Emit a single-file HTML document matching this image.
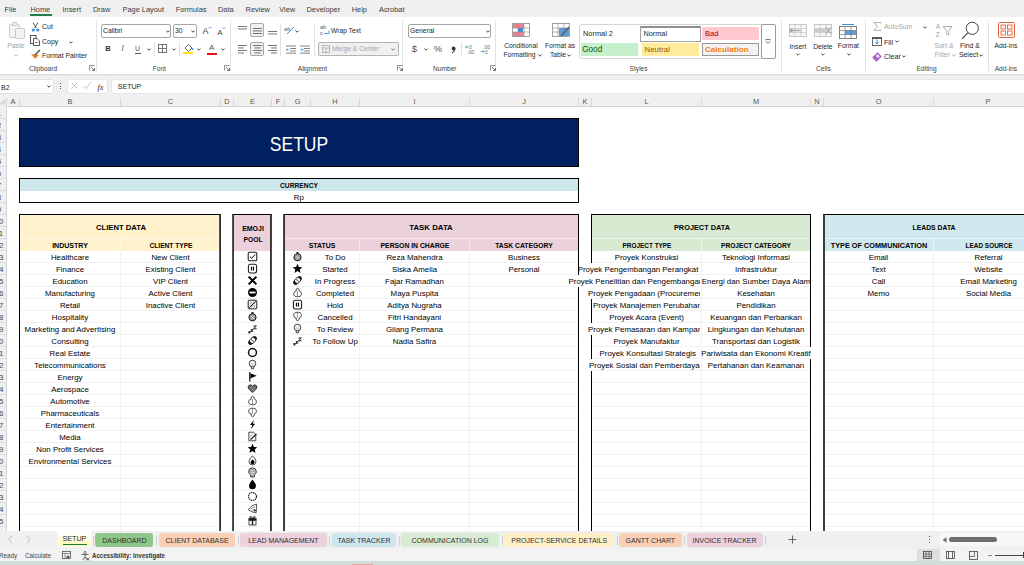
<!DOCTYPE html>
<html><head><meta charset="utf-8"><style>
html,body{margin:0;padding:0;}
body{width:1024px;height:565px;overflow:hidden;position:relative;background:#f0f0f0;font-family:"Liberation Sans",sans-serif;}
.t{position:absolute;white-space:pre;}
.r{position:absolute;box-sizing:border-box;}
.s{position:absolute;overflow:visible;}
</style></head><body>
<div class="r" style="left:0px;top:0px;width:1024px;height:17px;background:#f0f0f0;"></div><div class="t" style="top:5.54px;font-size:7.4px;line-height:7.4px;color:#3b3b3b;left:4.50px;">File</div><div class="t" style="top:5.54px;font-size:7.4px;line-height:7.4px;color:#3b3b3b;left:30.50px;">Home</div><div class="t" style="top:5.54px;font-size:7.4px;line-height:7.4px;color:#3b3b3b;left:62.50px;">Insert</div><div class="t" style="top:5.54px;font-size:7.4px;line-height:7.4px;color:#3b3b3b;left:93.00px;">Draw</div><div class="t" style="top:5.54px;font-size:7.4px;line-height:7.4px;color:#3b3b3b;left:122.50px;">Page Layout</div><div class="t" style="top:5.54px;font-size:7.4px;line-height:7.4px;color:#3b3b3b;left:175.70px;">Formulas</div><div class="t" style="top:5.54px;font-size:7.4px;line-height:7.4px;color:#3b3b3b;left:218.00px;">Data</div><div class="t" style="top:5.54px;font-size:7.4px;line-height:7.4px;color:#3b3b3b;left:245.60px;">Review</div><div class="t" style="top:5.54px;font-size:7.4px;line-height:7.4px;color:#3b3b3b;left:279.30px;">View</div><div class="t" style="top:5.54px;font-size:7.4px;line-height:7.4px;color:#3b3b3b;left:306.50px;">Developer</div><div class="t" style="top:5.54px;font-size:7.4px;line-height:7.4px;color:#3b3b3b;left:351.70px;">Help</div><div class="t" style="top:5.54px;font-size:7.4px;line-height:7.4px;color:#3b3b3b;left:379.00px;">Acrobat</div><div class="r" style="left:30px;top:14px;width:22px;height:2px;background:#237a4b;"></div><div class="r" style="left:0px;top:17px;width:1024px;height:57px;background:#ffffff;"></div><div class="r" style="left:0px;top:74px;width:1024px;height:1px;background:#dcdcdc;"></div><div class="r" style="left:0px;top:75px;width:1024px;height:1px;background:#e8e8e8;"></div><div class="r" style="left:96px;top:21px;width:1px;height:50px;background:#e1e1e1;"></div><div class="r" style="left:230px;top:21px;width:1px;height:50px;background:#e1e1e1;"></div><div class="r" style="left:402px;top:21px;width:1px;height:50px;background:#e1e1e1;"></div><div class="r" style="left:495px;top:21px;width:1px;height:50px;background:#e1e1e1;"></div><div class="r" style="left:781px;top:21px;width:1px;height:50px;background:#e1e1e1;"></div><div class="r" style="left:865px;top:21px;width:1px;height:50px;background:#e1e1e1;"></div><div class="r" style="left:988px;top:21px;width:1px;height:50px;background:#e1e1e1;"></div><div class="t" style="top:66.41px;font-size:6.6px;line-height:6.6px;color:#3f3f3f;left:-357.00px;width:800px;text-align:center;">Clipboard</div><div class="t" style="top:66.41px;font-size:6.6px;line-height:6.6px;color:#3f3f3f;left:-240.70px;width:800px;text-align:center;">Font</div><div class="t" style="top:66.41px;font-size:6.6px;line-height:6.6px;color:#3f3f3f;left:-87.60px;width:800px;text-align:center;">Alignment</div><div class="t" style="top:66.41px;font-size:6.6px;line-height:6.6px;color:#3f3f3f;left:44.80px;width:800px;text-align:center;">Number</div><div class="t" style="top:66.41px;font-size:6.6px;line-height:6.6px;color:#3f3f3f;left:238.60px;width:800px;text-align:center;">Styles</div><div class="t" style="top:66.41px;font-size:6.6px;line-height:6.6px;color:#3f3f3f;left:423.40px;width:800px;text-align:center;">Cells</div><div class="t" style="top:66.41px;font-size:6.6px;line-height:6.6px;color:#3f3f3f;left:526.50px;width:800px;text-align:center;">Editing</div><div class="t" style="top:66.41px;font-size:6.6px;line-height:6.6px;color:#3f3f3f;left:605.90px;width:800px;text-align:center;">Add-ins</div><svg class="s" style="left:88.5px;top:65px;" width="6" height="6" viewBox="0 0 6 6"><path d="M0.5 5.5V0.5H5.5" fill="none" stroke="#777" stroke-width="0.8"/><path d="M2 2L5.5 5.5M3 5.5H5.5V3" fill="none" stroke="#555" stroke-width="0.8"/></svg><svg class="s" style="left:223.5px;top:65px;" width="6" height="6" viewBox="0 0 6 6"><path d="M0.5 5.5V0.5H5.5" fill="none" stroke="#777" stroke-width="0.8"/><path d="M2 2L5.5 5.5M3 5.5H5.5V3" fill="none" stroke="#555" stroke-width="0.8"/></svg><svg class="s" style="left:396.5px;top:65px;" width="6" height="6" viewBox="0 0 6 6"><path d="M0.5 5.5V0.5H5.5" fill="none" stroke="#777" stroke-width="0.8"/><path d="M2 2L5.5 5.5M3 5.5H5.5V3" fill="none" stroke="#555" stroke-width="0.8"/></svg><svg class="s" style="left:489.5px;top:65px;" width="6" height="6" viewBox="0 0 6 6"><path d="M0.5 5.5V0.5H5.5" fill="none" stroke="#777" stroke-width="0.8"/><path d="M2 2L5.5 5.5M3 5.5H5.5V3" fill="none" stroke="#555" stroke-width="0.8"/></svg><svg class="s" style="left:8px;top:21px;" width="18" height="19" viewBox="0 0 18 19"><rect x="1.5" y="3.5" width="10" height="13" rx="1" fill="#f4f4f4" stroke="#c8c8c8"/><rect x="4" y="1.5" width="5" height="3" rx="1" fill="#eee" stroke="#c8c8c8"/><rect x="7.5" y="7.5" width="9" height="10" rx="1" fill="#f4f4f4" stroke="#c8c8c8"/></svg><div class="t" style="top:42.74px;font-size:6.8px;line-height:6.8px;color:#a0a0a0;left:-384.10px;width:800px;text-align:center;">Paste</div><svg class="s" style="left:14.0px;top:54.3px;" width="4" height="3" viewBox="0 0 4 3"><path d="M0.4 0.6L2 2.2L3.6 0.6" fill="none" stroke="#a8a8a8" stroke-width="1"/></svg><svg class="s" style="left:31px;top:22px;" width="9" height="10" viewBox="0 0 9 10"><path d="M2 0.5L5.5 6M7 0.5L3.5 6" stroke="#444" stroke-width="0.9" fill="none"/><circle cx="2.2" cy="8" r="1.6" fill="#3d8fd8"/><circle cx="6.8" cy="8" r="1.6" fill="#3d8fd8"/></svg><div class="t" style="top:23.27px;font-size:7px;line-height:7px;color:#262626;left:42.00px;">Cut</div><svg class="s" style="left:30px;top:35px;" width="10" height="11" viewBox="0 0 10 11"><rect x="0.5" y="0.5" width="5.5" height="8" fill="none" stroke="#444" stroke-width="0.9"/><path d="M3.5 3.5H7L9.5 6V10.5H3.5Z" fill="#fff" stroke="#444" stroke-width="0.9"/><rect x="5.5" y="7" width="2" height="1" fill="#444"/></svg><div class="t" style="top:38.07px;font-size:7px;line-height:7px;color:#262626;left:42.00px;">Copy</div><svg class="s" style="left:68.5px;top:40.8px;" width="4" height="3" viewBox="0 0 4 3"><path d="M0.4 0.6L2 2.2L3.6 0.6" fill="none" stroke="#444" stroke-width="1"/></svg><svg class="s" style="left:30px;top:49px;" width="11" height="11" viewBox="0 0 11 11"><path d="M1 5L5 10L9 6Z" fill="#e8832a"/><path d="M5 6L10 1" stroke="#444" stroke-width="1.2"/><path d="M7 4L9.5 1.5" stroke="#777" stroke-width="1.5"/></svg><div class="t" style="top:52.74px;font-size:6.8px;line-height:6.8px;color:#262626;left:42.00px;">Format Painter</div><div class="r" style="left:101px;top:24px;width:70px;height:14px;background:#fff;border:1px solid #a6a6a6;border-radius:2px;"></div><div class="t" style="top:27.84px;font-size:6.8px;line-height:6.8px;color:#262626;left:103.00px;">Calibri</div><svg class="s" style="left:165.5px;top:30.3px;" width="4" height="3" viewBox="0 0 4 3"><path d="M0.4 0.6L2 2.2L3.6 0.6" fill="none" stroke="#444" stroke-width="1"/></svg><div class="r" style="left:173px;top:24px;width:24px;height:14px;background:#fff;border:1px solid #a6a6a6;border-radius:2px;"></div><div class="t" style="top:27.84px;font-size:6.8px;line-height:6.8px;color:#262626;left:175.00px;">30</div><svg class="s" style="left:190.5px;top:30.3px;" width="4" height="3" viewBox="0 0 4 3"><path d="M0.4 0.6L2 2.2L3.6 0.6" fill="none" stroke="#444" stroke-width="1"/></svg><div class="t" style="top:27.38px;font-size:9px;line-height:9px;color:#444;left:-194.50px;width:800px;text-align:center;">A</div><svg class="s" style="left:208px;top:26px;" width="4" height="3" viewBox="0 0 4 3"><path d="M0.5 2.5L2 1L3.5 2.5" stroke="#3d8fd8" fill="none" stroke-width="0.8"/></svg><div class="t" style="top:28.65px;font-size:7.5px;line-height:7.5px;color:#444;left:-180.00px;width:800px;text-align:center;">A</div><svg class="s" style="left:222px;top:27px;" width="4" height="3" viewBox="0 0 4 3"><path d="M0.5 0.5L2 2L3.5 0.5" stroke="#3d8fd8" fill="none" stroke-width="0.8"/></svg><div class="t" style="top:45.15px;font-size:7.5px;line-height:7.5px;color:#333;font-weight:bold;left:-292.00px;width:800px;text-align:center;">B</div><div class="t" style="top:45.15px;font-size:7.5px;line-height:7.5px;color:#555;font-style:italic;font-family:'Liberation Serif';left:-277.50px;width:800px;text-align:center;">I</div><div class="t" style="top:45.07px;font-size:7px;line-height:7px;color:#555;left:-262.50px;width:800px;text-align:center;">U</div><div class="r" style="left:134.5px;top:52.5px;width:6px;height:0.8px;background:#555;"></div><svg class="s" style="left:146.5px;top:47.8px;" width="4" height="3" viewBox="0 0 4 3"><path d="M0.4 0.6L2 2.2L3.6 0.6" fill="none" stroke="#444" stroke-width="1"/></svg><div class="r" style="left:154px;top:42px;width:1px;height:14px;background:#e1e1e1;"></div><svg class="s" style="left:158px;top:44px;" width="9" height="9" viewBox="0 0 9 9"><rect x="0.5" y="0.5" width="8" height="8" fill="none" stroke="#666" stroke-width="0.9"/><path d="M4.5 0.5V8.5M0.5 4.5H8.5" stroke="#666" stroke-width="0.9"/></svg><svg class="s" style="left:171.5px;top:47.8px;" width="4" height="3" viewBox="0 0 4 3"><path d="M0.4 0.6L2 2.2L3.6 0.6" fill="none" stroke="#444" stroke-width="1"/></svg><div class="r" style="left:179px;top:42px;width:1px;height:14px;background:#e1e1e1;"></div><svg class="s" style="left:183px;top:42px;" width="11" height="12" viewBox="0 0 11 12"><path d="M2 6L5.5 2.5L9 6L5.5 9.5Z" fill="none" stroke="#555" stroke-width="0.9"/><circle cx="9.5" cy="7" r="1" fill="#3d8fd8"/><rect x="0" y="10" width="10" height="2" fill="#ffe500"/></svg><svg class="s" style="left:196.5px;top:47.8px;" width="4" height="3" viewBox="0 0 4 3"><path d="M0.4 0.6L2 2.2L3.6 0.6" fill="none" stroke="#444" stroke-width="1"/></svg><div class="t" style="top:44.40px;font-size:7.8px;line-height:7.8px;color:#555;left:-188.50px;width:800px;text-align:center;">A</div><div class="r" style="left:207px;top:53px;width:10px;height:2px;background:#e81123;"></div><svg class="s" style="left:220.5px;top:47.8px;" width="4" height="3" viewBox="0 0 4 3"><path d="M0.4 0.6L2 2.2L3.6 0.6" fill="none" stroke="#444" stroke-width="1"/></svg><svg class="s" style="left:238px;top:26px;" width="9" height="9" viewBox="0 0 9 9"><rect x="0.0" y="0.0" width="9" height="0.9" fill="#666"/><rect x="0.0" y="2.5" width="9" height="0.9" fill="#666"/></svg><div class="r" style="left:250px;top:23px;width:14px;height:14px;background:#f0f0f0;border:1px solid #a8a8a8;border-radius:2px;"></div><svg class="s" style="left:252.5px;top:27.5px;" width="9" height="9" viewBox="0 0 9 9"><rect x="0.0" y="0.0" width="9" height="0.9" fill="#666"/><rect x="0.0" y="2.5" width="9" height="0.9" fill="#666"/><rect x="0.0" y="5.0" width="9" height="0.9" fill="#666"/></svg><svg class="s" style="left:268px;top:31px;" width="9" height="9" viewBox="0 0 9 9"><rect x="0.0" y="0.0" width="9" height="0.9" fill="#666"/><rect x="0.0" y="2.5" width="9" height="0.9" fill="#666"/></svg><svg class="s" style="left:238px;top:45px;" width="9" height="9" viewBox="0 0 9 9"><rect x="0" y="0.0" width="9" height="0.9" fill="#666"/><rect x="0" y="2.5" width="6" height="0.9" fill="#666"/><rect x="0" y="5.0" width="9" height="0.9" fill="#666"/><rect x="0" y="7.5" width="6" height="0.9" fill="#666"/></svg><div class="r" style="left:250px;top:42px;width:14px;height:14px;background:#f0f0f0;border:1px solid #a8a8a8;border-radius:2px;"></div><svg class="s" style="left:252.5px;top:45px;" width="9" height="9" viewBox="0 0 9 9"><rect x="0.0" y="0.0" width="9" height="0.9" fill="#666"/><rect x="1.5" y="2.5" width="6" height="0.9" fill="#666"/><rect x="0.0" y="5.0" width="9" height="0.9" fill="#666"/><rect x="1.5" y="7.5" width="6" height="0.9" fill="#666"/></svg><svg class="s" style="left:268px;top:45px;" width="9" height="9" viewBox="0 0 9 9"><rect x="0" y="0.0" width="9" height="0.9" fill="#666"/><rect x="3" y="2.5" width="6" height="0.9" fill="#666"/><rect x="0" y="5.0" width="9" height="0.9" fill="#666"/><rect x="3" y="7.5" width="6" height="0.9" fill="#666"/></svg><div class="r" style="left:280px;top:24px;width:1px;height:32px;background:#e1e1e1;"></div><svg class="s" style="left:284px;top:25px;" width="12" height="10" viewBox="0 0 12 10"><text x="0" y="6" font-size="6" fill="#666" font-family="Liberation Sans">ab</text><path d="M3 9L10 2" stroke="#3d8fd8" stroke-width="1"/></svg><svg class="s" style="left:295.0px;top:30.3px;" width="4" height="3" viewBox="0 0 4 3"><path d="M0.4 0.6L2 2.2L3.6 0.6" fill="none" stroke="#444" stroke-width="1"/></svg><svg class="s" style="left:286px;top:45px;" width="10" height="8" viewBox="0 0 10 8"><path d="M0 1H10M4 3.5H10M4 6H10M0 8.2H10" stroke="#666" stroke-width="0.8"/><path d="M3 4.7L0.5 4.7M1.5 3.5L0.5 4.7L1.5 6" stroke="#3d8fd8" stroke-width="0.8" fill="none"/></svg><svg class="s" style="left:300px;top:45px;" width="10" height="8" viewBox="0 0 10 8"><path d="M0 1H10M4 3.5H10M4 6H10M0 8.2H10" stroke="#666" stroke-width="0.8"/><path d="M0.5 4.7L3 4.7M2 3.5L3 4.7L2 6" stroke="#3d8fd8" stroke-width="0.8" fill="none"/></svg><div class="r" style="left:314px;top:24px;width:1px;height:32px;background:#e1e1e1;"></div><svg class="s" style="left:320px;top:24px;" width="10" height="12" viewBox="0 0 10 12"><text x="0" y="5" font-size="5.5" fill="#555" font-family="Liberation Sans">ab</text><text x="0" y="11" font-size="5.5" fill="#555" font-family="Liberation Sans">c</text><path d="M4 9.5H9V6.5" stroke="#3d8fd8" stroke-width="0.9" fill="none"/></svg><div class="t" style="top:27.83px;font-size:6.7px;line-height:6.7px;color:#262626;left:331.00px;">Wrap Text</div><div class="r" style="left:318px;top:42px;width:81px;height:14px;background:#f0f0f0;border:1px solid #b4b4b4;border-radius:2px;"></div><svg class="s" style="left:322px;top:45px;" width="8" height="8" viewBox="0 0 8 8"><rect x="0.5" y="0.5" width="7" height="7" fill="none" stroke="#aaa" stroke-width="0.8"/><path d="M0.5 3H7.5M4 3V7.5" stroke="#aaa" stroke-width="0.8"/></svg><div class="t" style="top:45.83px;font-size:6.7px;line-height:6.7px;color:#a6a6a6;left:332.00px;">Merge &amp; Center</div><svg class="s" style="left:390.5px;top:48.3px;" width="4" height="3" viewBox="0 0 4 3"><path d="M0.4 0.6L2 2.2L3.6 0.6" fill="none" stroke="#777" stroke-width="1"/></svg><div class="r" style="left:408px;top:24px;width:83px;height:14px;background:#fff;border:1px solid #a6a6a6;border-radius:2px;"></div><div class="t" style="top:27.84px;font-size:6.8px;line-height:6.8px;color:#262626;left:410.00px;">General</div><svg class="s" style="left:485.5px;top:30.3px;" width="4" height="3" viewBox="0 0 4 3"><path d="M0.4 0.6L2 2.2L3.6 0.6" fill="none" stroke="#444" stroke-width="1"/></svg><div class="t" style="top:44.46px;font-size:9.5px;line-height:9.5px;color:#555;left:14.50px;width:800px;text-align:center;">$</div><svg class="s" style="left:423.5px;top:47.8px;" width="4" height="3" viewBox="0 0 4 3"><path d="M0.4 0.6L2 2.2L3.6 0.6" fill="none" stroke="#444" stroke-width="1"/></svg><div class="t" style="top:44.46px;font-size:9.5px;line-height:9.5px;color:#555;left:38.00px;width:800px;text-align:center;">%</div><svg class="s" style="left:450.5px;top:45.5px;" width="5" height="8" viewBox="0 0 5 8"><circle cx="2.6" cy="2.4" r="1.9" fill="#333"/><path d="M4.2 2.6Q4.4 5.6 1.2 7.4L0.9 6.8Q2.6 5.6 2.8 3.6Z" fill="#333"/></svg><div class="r" style="left:461px;top:42px;width:1px;height:14px;background:#e1e1e1;"></div><svg class="s" style="left:465px;top:44px;" width="10" height="10" viewBox="0 0 10 10"><text x="4" y="4.5" font-size="5" fill="#666" font-family="Liberation Sans">0</text><text x="2" y="9.5" font-size="5" fill="#666" font-family="Liberation Sans">.00</text><path d="M0.5 3L3.5 3M1.5 1.8L0.5 3L1.5 4.2" stroke="#3d8fd8" stroke-width="0.8" fill="none"/></svg><svg class="s" style="left:480px;top:44px;" width="10" height="10" viewBox="0 0 10 10"><text x="3" y="4.5" font-size="5" fill="#666" font-family="Liberation Sans">.00</text><text x="5" y="9.5" font-size="5" fill="#666" font-family="Liberation Sans">0</text><path d="M0.5 7.5L4 7.5M3 6.3L4 7.5L3 8.7" stroke="#3d8fd8" stroke-width="0.8" fill="none"/></svg><svg class="s" style="left:512px;top:23px;" width="18" height="14" viewBox="0 0 18 14"><rect x="0.5" y="0.5" width="17" height="13" fill="#fff" stroke="#888" stroke-width="0.8"/><rect x="1" y="1" width="11" height="4" fill="#f08090"/><rect x="1" y="9" width="11" height="4" fill="#f08090"/><rect x="6" y="5" width="5" height="4" fill="#3d8fd8"/><path d="M6 0.5V13.5M12 0.5V13.5M0.5 5H17.5M0.5 9H17.5" stroke="#888" stroke-width="0.6"/></svg><div class="t" style="top:42.53px;font-size:6.7px;line-height:6.7px;color:#262626;left:121.00px;width:800px;text-align:center;">Conditional</div><div class="t" style="top:52.13px;font-size:6.7px;line-height:6.7px;color:#262626;left:119.50px;width:800px;text-align:center;">Formatting</div><svg class="s" style="left:538.0px;top:54.3px;" width="4" height="3" viewBox="0 0 4 3"><path d="M0.4 0.6L2 2.2L3.6 0.6" fill="none" stroke="#444" stroke-width="1"/></svg><svg class="s" style="left:552px;top:23px;" width="18" height="14" viewBox="0 0 18 14"><rect x="0.5" y="0.5" width="17" height="13" fill="#fff" stroke="#888" stroke-width="0.8"/><rect x="7" y="5" width="10" height="8" fill="#5a9de0"/><path d="M6 0.5V13.5M12 0.5V13.5M0.5 5H17.5M0.5 9H17.5" stroke="#888" stroke-width="0.6"/><path d="M9 13L17 4" stroke="#555" stroke-width="1.2"/></svg><div class="t" style="top:42.53px;font-size:6.7px;line-height:6.7px;color:#262626;left:160.00px;width:800px;text-align:center;">Format as</div><div class="t" style="top:52.13px;font-size:6.7px;line-height:6.7px;color:#262626;left:158.00px;width:800px;text-align:center;">Table</div><svg class="s" style="left:567.0px;top:54.3px;" width="4" height="3" viewBox="0 0 4 3"><path d="M0.4 0.6L2 2.2L3.6 0.6" fill="none" stroke="#444" stroke-width="1"/></svg><div class="r" style="left:578.5px;top:24px;width:197px;height:35px;background:#fff;border:1px solid #d6d6d6;border-radius:3px;"></div><div class="t" style="top:29.74px;font-size:7.4px;line-height:7.4px;color:#262626;left:583.00px;">Normal 2</div><div class="r" style="left:640px;top:25.5px;width:61px;height:16px;background:#fff;border:1px solid #a0a0a0;border-top:2px solid #909090;"></div><div class="t" style="top:29.82px;font-size:7.3px;line-height:7.3px;color:#262626;left:643.50px;">Normal</div><div class="r" style="left:702px;top:27px;width:57px;height:13px;background:#ffc7ce;"></div><div class="t" style="top:29.65px;font-size:7.5px;line-height:7.5px;color:#9c0006;left:705.00px;">Bad</div><div class="r" style="left:581px;top:43px;width:57px;height:12.5px;background:#c6efce;"></div><div class="t" style="top:45.56px;font-size:8.2px;line-height:8.2px;color:#006100;left:582.20px;">Good</div><div class="r" style="left:641.5px;top:43px;width:57.5px;height:12.5px;background:#ffeb9c;"></div><div class="t" style="top:45.81px;font-size:7.9px;line-height:7.9px;color:#9c5700;left:644.50px;">Neutral</div><div class="r" style="left:702px;top:43px;width:57px;height:13px;background:#f2f2f2;border:1px solid #9a9a9a;"></div><div class="t" style="top:45.64px;font-size:8.1px;line-height:8.1px;color:#fa7d00;font-weight:bold;left:705.00px;">Calculation</div><div class="r" style="left:761px;top:24px;width:14.5px;height:35px;background:#fff;border:1px solid #9a9a9a;border-radius:2px;"></div><svg class="s" style="left:765px;top:39px;" width="6" height="5" viewBox="0 0 6 5"><path d="M0.5 0.5H5.5M0.5 2L3 4.3L5.5 2" stroke="#555" stroke-width="0.8" fill="none"/></svg><svg class="s" style="left:789px;top:23.5px;" width="18" height="15" viewBox="0 0 18 15"><rect x="0.5" y="0.5" width="17" height="12" fill="#f7f7f7" stroke="#bbb" stroke-width="0.8"/><path d="M6 0.5V12.5M12 0.5V12.5M0.5 4.5H17.5M0.5 8.5H17.5" stroke="#bbb" stroke-width="0.6"/><path d="M1 6.5H12M3.5 4.5L1 6.5L3.5 8.5" stroke="#aaa" stroke-width="1.5" fill="none"/></svg><svg class="s" style="left:814px;top:23.5px;" width="18" height="15" viewBox="0 0 18 15"><rect x="0.5" y="0.5" width="17" height="12" fill="#f7f7f7" stroke="#bbb" stroke-width="0.8"/><path d="M6 0.5V12.5M12 0.5V12.5M0.5 4.5H17.5M0.5 8.5H17.5" stroke="#bbb" stroke-width="0.6"/><path d="M12 3.5L17 9.5M17 3.5L12 9.5" stroke="#aaa" stroke-width="1.2"/><rect x="1" y="5" width="11" height="3" fill="#ccc"/></svg><svg class="s" style="left:839px;top:23.5px;" width="18" height="15" viewBox="0 0 18 15"><rect x="0.5" y="2.5" width="17" height="12" fill="#fff" stroke="#666" stroke-width="0.8"/><rect x="6" y="6.5" width="11" height="4" fill="#5a9de0"/><path d="M6 2.5V14.5M12 2.5V14.5M0.5 6.5H17.5M0.5 10.5H17.5" stroke="#666" stroke-width="0.6"/><rect x="3" y="0" width="12" height="1" fill="#3d8fd8"/></svg><div class="t" style="top:43.63px;font-size:6.7px;line-height:6.7px;color:#262626;left:397.90px;width:800px;text-align:center;">Insert</div><svg class="s" style="left:796.0px;top:53.3px;" width="4" height="3" viewBox="0 0 4 3"><path d="M0.4 0.6L2 2.2L3.6 0.6" fill="none" stroke="#444" stroke-width="1"/></svg><div class="t" style="top:43.63px;font-size:6.7px;line-height:6.7px;color:#262626;left:422.90px;width:800px;text-align:center;">Delete</div><svg class="s" style="left:821.0px;top:53.3px;" width="4" height="3" viewBox="0 0 4 3"><path d="M0.4 0.6L2 2.2L3.6 0.6" fill="none" stroke="#444" stroke-width="1"/></svg><div class="t" style="top:43.33px;font-size:6.7px;line-height:6.7px;color:#262626;left:448.40px;width:800px;text-align:center;">Format</div><svg class="s" style="left:846.5px;top:53.3px;" width="4" height="3" viewBox="0 0 4 3"><path d="M0.4 0.6L2 2.2L3.6 0.6" fill="none" stroke="#444" stroke-width="1"/></svg><svg class="s" style="left:873px;top:22px;" width="9" height="9" viewBox="0 0 9 9"><path d="M8 1.5V0.6H0.8L4.6 4.5L0.8 8.4H8V7.5" fill="none" stroke="#a8a8a8" stroke-width="0.9"/></svg><div class="t" style="top:23.96px;font-size:6.9px;line-height:6.9px;color:#a6a6a6;left:884.00px;">AutoSum</div><svg class="s" style="left:922.5px;top:25.8px;" width="4" height="3" viewBox="0 0 4 3"><path d="M0.4 0.6L2 2.2L3.6 0.6" fill="none" stroke="#444" stroke-width="1"/></svg><svg class="s" style="left:872px;top:36.5px;" width="10" height="9" viewBox="0 0 10 9"><rect x="0.5" y="0.5" width="9" height="8" fill="#fff" stroke="#555" stroke-width="0.9"/><rect x="0.5" y="0.5" width="9" height="1.5" fill="#555"/><path d="M5 2.5V7M3.3 5.3L5 7L6.7 5.3" stroke="#3d8fd8" stroke-width="1" fill="none"/></svg><div class="t" style="top:38.67px;font-size:7px;line-height:7px;color:#262626;left:884.00px;">Fill</div><svg class="s" style="left:895.0px;top:40.3px;" width="4" height="3" viewBox="0 0 4 3"><path d="M0.4 0.6L2 2.2L3.6 0.6" fill="none" stroke="#444" stroke-width="1"/></svg><svg class="s" style="left:872px;top:51.5px;" width="10" height="9" viewBox="0 0 10 9"><path d="M1 5.5L5.5 1L9 4.5L4.5 9Z" fill="#e6c9f5" stroke="#b05ac8" stroke-width="1.1"/><path d="M1 5.5L3 3.5L6.5 7L4.5 9Z" fill="#b05ac8"/></svg><div class="t" style="top:53.27px;font-size:7px;line-height:7px;color:#262626;left:884.00px;">Clear</div><svg class="s" style="left:902.0px;top:55.099999999999994px;" width="4" height="3" viewBox="0 0 4 3"><path d="M0.4 0.6L2 2.2L3.6 0.6" fill="none" stroke="#444" stroke-width="1"/></svg><svg class="s" style="left:935px;top:22px;" width="18" height="16" viewBox="0 0 18 16"><text x="0.5" y="7" font-size="7.5" fill="#aaa" font-family="Liberation Sans">A</text><text x="0.5" y="15" font-size="7.5" fill="#aaa" font-family="Liberation Sans">Z</text><path d="M8 4.5H17L13.8 8.6V13L11.4 12V8.6Z" fill="none" stroke="#aaa" stroke-width="1"/></svg><div class="t" style="top:42.56px;font-size:6.9px;line-height:6.9px;color:#a6a6a6;left:544.00px;width:800px;text-align:center;">Sort &amp;</div><div class="t" style="top:51.76px;font-size:6.9px;line-height:6.9px;color:#a6a6a6;left:542.30px;width:800px;text-align:center;">Filter</div><svg class="s" style="left:951.5px;top:53.9px;" width="4" height="3" viewBox="0 0 4 3"><path d="M0.4 0.6L2 2.2L3.6 0.6" fill="none" stroke="#aaa" stroke-width="1"/></svg><svg class="s" style="left:961px;top:20.5px;" width="18" height="19" viewBox="0 0 18 19"><circle cx="11.3" cy="7.3" r="6.1" fill="none" stroke="#444" stroke-width="1"/><path d="M7 11.6L1 17.8" stroke="#444" stroke-width="1.1"/></svg><div class="t" style="top:42.56px;font-size:6.9px;line-height:6.9px;color:#262626;left:570.00px;width:800px;text-align:center;">Find &amp;</div><div class="t" style="top:51.76px;font-size:6.9px;line-height:6.9px;color:#262626;left:568.50px;width:800px;text-align:center;">Select</div><svg class="s" style="left:979.0px;top:53.9px;" width="4" height="3" viewBox="0 0 4 3"><path d="M0.4 0.6L2 2.2L3.6 0.6" fill="none" stroke="#444" stroke-width="1"/></svg><svg class="s" style="left:998px;top:22px;" width="17" height="16" viewBox="0 0 17 16"><rect x="0.5" y="0.5" width="16" height="15" rx="1" fill="none" stroke="#e0603a" stroke-width="1"/><rect x="3" y="3" width="4.5" height="4" fill="none" stroke="#e0603a" stroke-width="0.9"/><rect x="9.5" y="3" width="4.5" height="4" fill="none" stroke="#e0603a" stroke-width="0.9"/><rect x="3" y="9" width="4.5" height="4" fill="none" stroke="#e0603a" stroke-width="0.9"/><rect x="9.5" y="9" width="4.5" height="4" fill="none" stroke="#e0603a" stroke-width="0.9"/></svg><div class="t" style="top:42.93px;font-size:6.7px;line-height:6.7px;color:#262626;left:605.90px;width:800px;text-align:center;">Add-ins</div><div class="r" style="left:-3px;top:79px;width:57px;height:14.5px;background:#fff;border:1px solid #e0e0e0;border-radius:3px;"></div><div class="t" style="top:83.57px;font-size:7px;line-height:7px;color:#262626;left:1.00px;">B2</div><svg class="s" style="left:47.0px;top:85.3px;" width="4" height="3" viewBox="0 0 4 3"><path d="M0.4 0.6L2 2.2L3.6 0.6" fill="none" stroke="#444" stroke-width="1"/></svg><div class="r" style="left:59.5px;top:83px;width:1.2px;height:1.2px;background:#555;"></div><div class="r" style="left:59.5px;top:85.5px;width:1.2px;height:1.2px;background:#555;"></div><div class="r" style="left:59.5px;top:88px;width:1.2px;height:1.2px;background:#555;"></div><div class="r" style="left:67px;top:79px;width:41px;height:14.5px;background:#fff;border:1px solid #e6e6e6;border-radius:3px;"></div><svg class="s" style="left:71px;top:82px;" width="7" height="7" viewBox="0 0 7 7"><path d="M0.5 0.5L6.5 6.5M6.5 0.5L0.5 6.5" stroke="#bbb" stroke-width="0.9"/></svg><svg class="s" style="left:83px;top:82px;" width="8" height="7" viewBox="0 0 8 7"><path d="M0.5 4L3 6.5L7.5 0.5" stroke="#bbb" stroke-width="0.9" fill="none"/></svg><div class="t" style="top:82.80px;font-size:8.5px;line-height:8.5px;color:#333;font-style:italic;font-family:'Liberation Serif';left:-299.50px;width:800px;text-align:center;">fx</div><div class="r" style="left:111px;top:79px;width:920px;height:14.5px;background:#fff;border:1px solid #e6e6e6;border-radius:3px;"></div><div class="t" style="top:83.37px;font-size:7px;line-height:7px;color:#262626;left:117.80px;">SETUP</div><div class="r" style="left:7px;top:106px;width:1017px;height:425px;background:#ffffff;"></div><div class="r" style="left:0px;top:95px;width:1024px;height:11px;background:#f0f0f0;"></div><div class="r" style="left:0px;top:105.5px;width:1024px;height:1px;background:#d4d4d4;"></div><div class="t" style="top:98.14px;font-size:7.4px;line-height:7.4px;color:#555;left:-387.00px;width:800px;text-align:center;">A</div><div class="r" style="left:19px;top:98px;width:1px;height:8px;background:#dadada;"></div><div class="t" style="top:98.14px;font-size:7.4px;line-height:7.4px;color:#555;left:-330.00px;width:800px;text-align:center;">B</div><div class="r" style="left:120px;top:98px;width:1px;height:8px;background:#dadada;"></div><div class="t" style="top:98.14px;font-size:7.4px;line-height:7.4px;color:#555;left:-229.50px;width:800px;text-align:center;">C</div><div class="r" style="left:220px;top:98px;width:1px;height:8px;background:#dadada;"></div><div class="t" style="top:98.14px;font-size:7.4px;line-height:7.4px;color:#555;left:-173.00px;width:800px;text-align:center;">D</div><div class="r" style="left:233px;top:98px;width:1px;height:8px;background:#dadada;"></div><div class="t" style="top:98.14px;font-size:7.4px;line-height:7.4px;color:#555;left:-147.50px;width:800px;text-align:center;">E</div><div class="r" style="left:271px;top:98px;width:1px;height:8px;background:#dadada;"></div><div class="t" style="top:98.14px;font-size:7.4px;line-height:7.4px;color:#555;left:-122.00px;width:800px;text-align:center;">F</div><div class="r" style="left:284px;top:98px;width:1px;height:8px;background:#dadada;"></div><div class="t" style="top:98.14px;font-size:7.4px;line-height:7.4px;color:#555;left:-102.50px;width:800px;text-align:center;">G</div><div class="r" style="left:310px;top:98px;width:1px;height:8px;background:#dadada;"></div><div class="t" style="top:98.14px;font-size:7.4px;line-height:7.4px;color:#555;left:-65.00px;width:800px;text-align:center;">H</div><div class="r" style="left:359px;top:98px;width:1px;height:8px;background:#dadada;"></div><div class="t" style="top:98.14px;font-size:7.4px;line-height:7.4px;color:#555;left:14.50px;width:800px;text-align:center;">I</div><div class="r" style="left:469px;top:98px;width:1px;height:8px;background:#dadada;"></div><div class="t" style="top:98.14px;font-size:7.4px;line-height:7.4px;color:#555;left:124.00px;width:800px;text-align:center;">J</div><div class="r" style="left:578px;top:98px;width:1px;height:8px;background:#dadada;"></div><div class="t" style="top:98.14px;font-size:7.4px;line-height:7.4px;color:#555;left:185.00px;width:800px;text-align:center;">K</div><div class="r" style="left:591px;top:98px;width:1px;height:8px;background:#dadada;"></div><div class="t" style="top:98.14px;font-size:7.4px;line-height:7.4px;color:#555;left:246.50px;width:800px;text-align:center;">L</div><div class="r" style="left:701px;top:98px;width:1px;height:8px;background:#dadada;"></div><div class="t" style="top:98.14px;font-size:7.4px;line-height:7.4px;color:#555;left:356.00px;width:800px;text-align:center;">M</div><div class="r" style="left:810px;top:98px;width:1px;height:8px;background:#dadada;"></div><div class="t" style="top:98.14px;font-size:7.4px;line-height:7.4px;color:#555;left:417.00px;width:800px;text-align:center;">N</div><div class="r" style="left:823px;top:98px;width:1px;height:8px;background:#dadada;"></div><div class="t" style="top:98.14px;font-size:7.4px;line-height:7.4px;color:#555;left:478.50px;width:800px;text-align:center;">O</div><div class="r" style="left:933px;top:98px;width:1px;height:8px;background:#dadada;"></div><div class="t" style="top:98.14px;font-size:7.4px;line-height:7.4px;color:#555;left:588.00px;width:800px;text-align:center;">P</div><div class="r" style="left:6px;top:98px;width:1px;height:8px;background:#dadada;"></div><svg class="s" style="left:0px;top:97px;" width="6" height="8" viewBox="0 0 6 8"><path d="M5.5 1.5V7.5H-1Z" fill="#d8d8d8"/></svg><div class="r" style="left:0px;top:106px;width:6.5px;height:425px;background:#f0f0f0;"></div><div class="r" style="left:6px;top:106px;width:1px;height:425px;background:#d4d4d4;"></div><div class="r" style="left:0;top:106px;width:6px;height:425px;overflow:hidden;"><div class="r" style="left:0;top:12px;width:6px;height:1px;background:#dcdcdc"></div><div class="t" style="left:-21px;width:40px;text-align:center;top:3.6px;font-size:8px;line-height:8px;color:#4a4a4a">1</div><div class="r" style="left:0;top:24px;width:6px;height:1px;background:#dcdcdc"></div><div class="t" style="left:-21px;width:40px;text-align:center;top:15.6px;font-size:8px;line-height:8px;color:#4a4a4a">2</div><div class="r" style="left:0;top:36px;width:6px;height:1px;background:#dcdcdc"></div><div class="t" style="left:-21px;width:40px;text-align:center;top:27.6px;font-size:8px;line-height:8px;color:#4a4a4a">3</div><div class="r" style="left:0;top:48px;width:6px;height:1px;background:#dcdcdc"></div><div class="t" style="left:-21px;width:40px;text-align:center;top:39.6px;font-size:8px;line-height:8px;color:#4a4a4a">4</div><div class="r" style="left:0;top:60px;width:6px;height:1px;background:#dcdcdc"></div><div class="t" style="left:-21px;width:40px;text-align:center;top:51.6px;font-size:8px;line-height:8px;color:#4a4a4a">5</div><div class="r" style="left:0;top:72px;width:6px;height:1px;background:#dcdcdc"></div><div class="t" style="left:-21px;width:40px;text-align:center;top:63.6px;font-size:8px;line-height:8px;color:#4a4a4a">6</div><div class="r" style="left:0;top:84px;width:6px;height:1px;background:#dcdcdc"></div><div class="t" style="left:-21px;width:40px;text-align:center;top:75.6px;font-size:8px;line-height:8px;color:#4a4a4a">7</div><div class="r" style="left:0;top:96px;width:6px;height:1px;background:#dcdcdc"></div><div class="t" style="left:-21px;width:40px;text-align:center;top:87.6px;font-size:8px;line-height:8px;color:#4a4a4a">8</div><div class="r" style="left:0;top:108px;width:6px;height:1px;background:#dcdcdc"></div><div class="t" style="left:-21px;width:40px;text-align:center;top:99.6px;font-size:8px;line-height:8px;color:#4a4a4a">9</div><div class="r" style="left:0;top:120px;width:6px;height:1px;background:#dcdcdc"></div><div class="t" style="left:-21px;width:40px;text-align:center;top:111.6px;font-size:8px;line-height:8px;color:#4a4a4a">10</div><div class="r" style="left:0;top:132px;width:6px;height:1px;background:#dcdcdc"></div><div class="t" style="left:-21px;width:40px;text-align:center;top:123.6px;font-size:8px;line-height:8px;color:#4a4a4a">11</div><div class="r" style="left:0;top:144px;width:6px;height:1px;background:#dcdcdc"></div><div class="t" style="left:-21px;width:40px;text-align:center;top:135.6px;font-size:8px;line-height:8px;color:#4a4a4a">12</div><div class="r" style="left:0;top:156px;width:6px;height:1px;background:#dcdcdc"></div><div class="t" style="left:-21px;width:40px;text-align:center;top:147.6px;font-size:8px;line-height:8px;color:#4a4a4a">13</div><div class="r" style="left:0;top:168px;width:6px;height:1px;background:#dcdcdc"></div><div class="t" style="left:-21px;width:40px;text-align:center;top:159.6px;font-size:8px;line-height:8px;color:#4a4a4a">14</div><div class="r" style="left:0;top:180px;width:6px;height:1px;background:#dcdcdc"></div><div class="t" style="left:-21px;width:40px;text-align:center;top:171.6px;font-size:8px;line-height:8px;color:#4a4a4a">15</div><div class="r" style="left:0;top:192px;width:6px;height:1px;background:#dcdcdc"></div><div class="t" style="left:-21px;width:40px;text-align:center;top:183.6px;font-size:8px;line-height:8px;color:#4a4a4a">16</div><div class="r" style="left:0;top:204px;width:6px;height:1px;background:#dcdcdc"></div><div class="t" style="left:-21px;width:40px;text-align:center;top:195.6px;font-size:8px;line-height:8px;color:#4a4a4a">17</div><div class="r" style="left:0;top:216px;width:6px;height:1px;background:#dcdcdc"></div><div class="t" style="left:-21px;width:40px;text-align:center;top:207.6px;font-size:8px;line-height:8px;color:#4a4a4a">18</div><div class="r" style="left:0;top:228px;width:6px;height:1px;background:#dcdcdc"></div><div class="t" style="left:-21px;width:40px;text-align:center;top:219.6px;font-size:8px;line-height:8px;color:#4a4a4a">19</div><div class="r" style="left:0;top:240px;width:6px;height:1px;background:#dcdcdc"></div><div class="t" style="left:-21px;width:40px;text-align:center;top:231.6px;font-size:8px;line-height:8px;color:#4a4a4a">20</div><div class="r" style="left:0;top:252px;width:6px;height:1px;background:#dcdcdc"></div><div class="t" style="left:-21px;width:40px;text-align:center;top:243.6px;font-size:8px;line-height:8px;color:#4a4a4a">21</div><div class="r" style="left:0;top:264px;width:6px;height:1px;background:#dcdcdc"></div><div class="t" style="left:-21px;width:40px;text-align:center;top:255.6px;font-size:8px;line-height:8px;color:#4a4a4a">22</div><div class="r" style="left:0;top:276px;width:6px;height:1px;background:#dcdcdc"></div><div class="t" style="left:-21px;width:40px;text-align:center;top:267.6px;font-size:8px;line-height:8px;color:#4a4a4a">23</div><div class="r" style="left:0;top:288px;width:6px;height:1px;background:#dcdcdc"></div><div class="t" style="left:-21px;width:40px;text-align:center;top:279.6px;font-size:8px;line-height:8px;color:#4a4a4a">24</div><div class="r" style="left:0;top:300px;width:6px;height:1px;background:#dcdcdc"></div><div class="t" style="left:-21px;width:40px;text-align:center;top:291.6px;font-size:8px;line-height:8px;color:#4a4a4a">25</div><div class="r" style="left:0;top:312px;width:6px;height:1px;background:#dcdcdc"></div><div class="t" style="left:-21px;width:40px;text-align:center;top:303.6px;font-size:8px;line-height:8px;color:#4a4a4a">26</div><div class="r" style="left:0;top:324px;width:6px;height:1px;background:#dcdcdc"></div><div class="t" style="left:-21px;width:40px;text-align:center;top:315.6px;font-size:8px;line-height:8px;color:#4a4a4a">27</div><div class="r" style="left:0;top:336px;width:6px;height:1px;background:#dcdcdc"></div><div class="t" style="left:-21px;width:40px;text-align:center;top:327.6px;font-size:8px;line-height:8px;color:#4a4a4a">28</div><div class="r" style="left:0;top:348px;width:6px;height:1px;background:#dcdcdc"></div><div class="t" style="left:-21px;width:40px;text-align:center;top:339.6px;font-size:8px;line-height:8px;color:#4a4a4a">29</div><div class="r" style="left:0;top:360px;width:6px;height:1px;background:#dcdcdc"></div><div class="t" style="left:-21px;width:40px;text-align:center;top:351.6px;font-size:8px;line-height:8px;color:#4a4a4a">30</div><div class="r" style="left:0;top:372px;width:6px;height:1px;background:#dcdcdc"></div><div class="t" style="left:-21px;width:40px;text-align:center;top:363.6px;font-size:8px;line-height:8px;color:#4a4a4a">31</div><div class="r" style="left:0;top:384px;width:6px;height:1px;background:#dcdcdc"></div><div class="t" style="left:-21px;width:40px;text-align:center;top:375.6px;font-size:8px;line-height:8px;color:#4a4a4a">32</div><div class="r" style="left:0;top:396px;width:6px;height:1px;background:#dcdcdc"></div><div class="t" style="left:-21px;width:40px;text-align:center;top:387.6px;font-size:8px;line-height:8px;color:#4a4a4a">33</div><div class="r" style="left:0;top:408px;width:6px;height:1px;background:#dcdcdc"></div><div class="t" style="left:-21px;width:40px;text-align:center;top:399.6px;font-size:8px;line-height:8px;color:#4a4a4a">34</div><div class="r" style="left:0;top:420px;width:6px;height:1px;background:#dcdcdc"></div><div class="t" style="left:-21px;width:40px;text-align:center;top:411.6px;font-size:8px;line-height:8px;color:#4a4a4a">35</div><div class="r" style="left:0;top:432px;width:6px;height:1px;background:#dcdcdc"></div><div class="t" style="left:-21px;width:40px;text-align:center;top:423.6px;font-size:8px;line-height:8px;color:#4a4a4a">36</div></div><div class="r" style="left:19px;top:118px;width:560px;height:49px;background:#002060;border:1px solid #000;"></div><div class="t" style="top:133.87px;font-size:20px;line-height:20px;color:#fff;left:-101.20px;width:800px;text-align:center;transform:scaleX(0.875);transform-origin:50% 0;">SETUP</div><div class="r" style="left:19px;top:178px;width:560px;height:13px;background:#cde6ec;"></div><div class="r" style="left:19px;top:178px;width:560px;height:25px;border:1px solid #000;"></div><div class="t" style="top:181.57px;font-size:7.0px;line-height:7.0px;color:#000;font-weight:bold;left:-101.20px;width:800px;text-align:center;transform:scaleX(0.957);transform-origin:50% 0;">CURRENCY</div><div class="t" style="top:193.81px;font-size:7.9px;line-height:7.9px;color:#000;left:-101.20px;width:800px;text-align:center;">Rp</div><div class="r" style="left:19px;top:214px;width:202px;height:37px;background:#fff2cc;"></div><div class="r" style="left:19px;top:238px;width:202px;height:1px;background:rgba(255,255,255,0.55);"></div><div class="r" style="left:120px;top:238px;width:1px;height:12px;background:rgba(255,255,255,0.55);"></div><div class="r" style="left:19px;top:262px;width:202px;height:1px;background:#f2f2f2;"></div><div class="r" style="left:19px;top:274px;width:202px;height:1px;background:#f2f2f2;"></div><div class="r" style="left:19px;top:286px;width:202px;height:1px;background:#f2f2f2;"></div><div class="r" style="left:19px;top:298px;width:202px;height:1px;background:#f2f2f2;"></div><div class="r" style="left:19px;top:310px;width:202px;height:1px;background:#f2f2f2;"></div><div class="r" style="left:19px;top:322px;width:202px;height:1px;background:#f2f2f2;"></div><div class="r" style="left:19px;top:334px;width:202px;height:1px;background:#f2f2f2;"></div><div class="r" style="left:19px;top:346px;width:202px;height:1px;background:#f2f2f2;"></div><div class="r" style="left:19px;top:358px;width:202px;height:1px;background:#f2f2f2;"></div><div class="r" style="left:19px;top:370px;width:202px;height:1px;background:#f2f2f2;"></div><div class="r" style="left:19px;top:382px;width:202px;height:1px;background:#f2f2f2;"></div><div class="r" style="left:19px;top:394px;width:202px;height:1px;background:#f2f2f2;"></div><div class="r" style="left:19px;top:406px;width:202px;height:1px;background:#f2f2f2;"></div><div class="r" style="left:19px;top:418px;width:202px;height:1px;background:#f2f2f2;"></div><div class="r" style="left:19px;top:430px;width:202px;height:1px;background:#f2f2f2;"></div><div class="r" style="left:19px;top:442px;width:202px;height:1px;background:#f2f2f2;"></div><div class="r" style="left:19px;top:454px;width:202px;height:1px;background:#f2f2f2;"></div><div class="r" style="left:19px;top:466px;width:202px;height:1px;background:#f2f2f2;"></div><div class="r" style="left:19px;top:478px;width:202px;height:1px;background:#f2f2f2;"></div><div class="r" style="left:19px;top:490px;width:202px;height:1px;background:#f2f2f2;"></div><div class="r" style="left:19px;top:502px;width:202px;height:1px;background:#f2f2f2;"></div><div class="r" style="left:19px;top:514px;width:202px;height:1px;background:#f2f2f2;"></div><div class="r" style="left:19px;top:526px;width:202px;height:1px;background:#f2f2f2;"></div><div class="r" style="left:120px;top:250px;width:1px;height:295px;background:#f2f2f2;"></div><div class="r" style="left:19px;top:214px;width:202px;height:1px;background:#000;"></div><svg class="s" style="left:17px;top:214px;overflow:hidden;" width="5" height="331" viewBox="0 0 5 331"><rect x="2.000" y="0" width="1.000" height="331" fill="#000"/></svg><svg class="s" style="left:218px;top:214px;overflow:hidden;" width="5" height="331" viewBox="0 0 5 331"><rect x="1.250" y="0" width="1.700" height="331" fill="#222"/></svg><div class="t" style="top:224.35px;font-size:7.5px;line-height:7.5px;color:#000;font-weight:bold;left:-279.50px;width:800px;text-align:center;transform:scaleX(1.022);transform-origin:50% 0;">CLIENT DATA</div><div class="t" style="top:241.77px;font-size:7.0px;line-height:7.0px;color:#000;font-weight:bold;left:-330.00px;width:800px;text-align:center;transform:scaleX(1.004);transform-origin:50% 0;">INDUSTRY</div><div class="t" style="top:241.77px;font-size:7.0px;line-height:7.0px;color:#000;font-weight:bold;left:-229.50px;width:800px;text-align:center;transform:scaleX(0.945);transform-origin:50% 0;">CLIENT TYPE</div><div class="t" style="top:253.81px;font-size:7.9px;line-height:7.9px;color:#000;left:-330.00px;width:800px;text-align:center;">Healthcare</div><div class="t" style="top:265.81px;font-size:7.9px;line-height:7.9px;color:#000;left:-330.00px;width:800px;text-align:center;">Finance</div><div class="t" style="top:277.81px;font-size:7.9px;line-height:7.9px;color:#000;left:-330.00px;width:800px;text-align:center;">Education</div><div class="t" style="top:289.81px;font-size:7.9px;line-height:7.9px;color:#000;left:-330.00px;width:800px;text-align:center;">Manufacturing</div><div class="t" style="top:301.81px;font-size:7.9px;line-height:7.9px;color:#000;left:-330.00px;width:800px;text-align:center;">Retail</div><div class="t" style="top:313.81px;font-size:7.9px;line-height:7.9px;color:#000;left:-330.00px;width:800px;text-align:center;">Hospitality</div><div class="t" style="top:325.81px;font-size:7.9px;line-height:7.9px;color:#000;left:-330.00px;width:800px;text-align:center;">Marketing and Advertising</div><div class="t" style="top:337.81px;font-size:7.9px;line-height:7.9px;color:#000;left:-330.00px;width:800px;text-align:center;">Consulting</div><div class="t" style="top:349.81px;font-size:7.9px;line-height:7.9px;color:#000;left:-330.00px;width:800px;text-align:center;">Real Estate</div><div class="t" style="top:361.81px;font-size:7.9px;line-height:7.9px;color:#000;left:-330.00px;width:800px;text-align:center;">Telecommunications</div><div class="t" style="top:373.81px;font-size:7.9px;line-height:7.9px;color:#000;left:-330.00px;width:800px;text-align:center;">Energy</div><div class="t" style="top:385.81px;font-size:7.9px;line-height:7.9px;color:#000;left:-330.00px;width:800px;text-align:center;">Aerospace</div><div class="t" style="top:397.81px;font-size:7.9px;line-height:7.9px;color:#000;left:-330.00px;width:800px;text-align:center;">Automotive</div><div class="t" style="top:409.81px;font-size:7.9px;line-height:7.9px;color:#000;left:-330.00px;width:800px;text-align:center;">Pharmaceuticals</div><div class="t" style="top:421.81px;font-size:7.9px;line-height:7.9px;color:#000;left:-330.00px;width:800px;text-align:center;">Entertainment</div><div class="t" style="top:433.81px;font-size:7.9px;line-height:7.9px;color:#000;left:-330.00px;width:800px;text-align:center;">Media</div><div class="t" style="top:445.81px;font-size:7.9px;line-height:7.9px;color:#000;left:-330.00px;width:800px;text-align:center;">Non Profit Services</div><div class="t" style="top:457.81px;font-size:7.9px;line-height:7.9px;color:#000;left:-330.00px;width:800px;text-align:center;">Environmental Services</div><div class="t" style="top:253.81px;font-size:7.9px;line-height:7.9px;color:#000;left:-229.50px;width:800px;text-align:center;">New Client</div><div class="t" style="top:265.81px;font-size:7.9px;line-height:7.9px;color:#000;left:-229.50px;width:800px;text-align:center;">Existing Client</div><div class="t" style="top:277.81px;font-size:7.9px;line-height:7.9px;color:#000;left:-229.50px;width:800px;text-align:center;">VIP Client</div><div class="t" style="top:289.81px;font-size:7.9px;line-height:7.9px;color:#000;left:-229.50px;width:800px;text-align:center;">Active Client</div><div class="t" style="top:301.81px;font-size:7.9px;line-height:7.9px;color:#000;left:-229.50px;width:800px;text-align:center;">Inactive Client</div><div class="r" style="left:233px;top:214px;width:39px;height:37px;background:#ead1dc;"></div><div class="r" style="left:233px;top:262px;width:39px;height:1px;background:#f2f2f2;"></div><div class="r" style="left:233px;top:274px;width:39px;height:1px;background:#f2f2f2;"></div><div class="r" style="left:233px;top:286px;width:39px;height:1px;background:#f2f2f2;"></div><div class="r" style="left:233px;top:298px;width:39px;height:1px;background:#f2f2f2;"></div><div class="r" style="left:233px;top:310px;width:39px;height:1px;background:#f2f2f2;"></div><div class="r" style="left:233px;top:322px;width:39px;height:1px;background:#f2f2f2;"></div><div class="r" style="left:233px;top:334px;width:39px;height:1px;background:#f2f2f2;"></div><div class="r" style="left:233px;top:346px;width:39px;height:1px;background:#f2f2f2;"></div><div class="r" style="left:233px;top:358px;width:39px;height:1px;background:#f2f2f2;"></div><div class="r" style="left:233px;top:370px;width:39px;height:1px;background:#f2f2f2;"></div><div class="r" style="left:233px;top:382px;width:39px;height:1px;background:#f2f2f2;"></div><div class="r" style="left:233px;top:394px;width:39px;height:1px;background:#f2f2f2;"></div><div class="r" style="left:233px;top:406px;width:39px;height:1px;background:#f2f2f2;"></div><div class="r" style="left:233px;top:418px;width:39px;height:1px;background:#f2f2f2;"></div><div class="r" style="left:233px;top:430px;width:39px;height:1px;background:#f2f2f2;"></div><div class="r" style="left:233px;top:442px;width:39px;height:1px;background:#f2f2f2;"></div><div class="r" style="left:233px;top:454px;width:39px;height:1px;background:#f2f2f2;"></div><div class="r" style="left:233px;top:466px;width:39px;height:1px;background:#f2f2f2;"></div><div class="r" style="left:233px;top:478px;width:39px;height:1px;background:#f2f2f2;"></div><div class="r" style="left:233px;top:490px;width:39px;height:1px;background:#f2f2f2;"></div><div class="r" style="left:233px;top:502px;width:39px;height:1px;background:#f2f2f2;"></div><div class="r" style="left:233px;top:514px;width:39px;height:1px;background:#f2f2f2;"></div><div class="r" style="left:233px;top:526px;width:39px;height:1px;background:#f2f2f2;"></div><div class="r" style="left:233px;top:214px;width:39px;height:1px;background:#000;"></div><svg class="s" style="left:231px;top:214px;overflow:hidden;" width="5" height="331" viewBox="0 0 5 331"><rect x="1.250" y="0" width="1.600" height="331" fill="#1a1a1a"/></svg><svg class="s" style="left:268px;top:214px;overflow:hidden;" width="5" height="331" viewBox="0 0 5 331"><rect x="2.000" y="0" width="1.900" height="331" fill="#333"/></svg><div class="t" style="top:224.77px;font-size:7.0px;line-height:7.0px;color:#000;font-weight:bold;left:-147.50px;width:800px;text-align:center;transform:scaleX(0.997);transform-origin:50% 0;">EMOJI</div><div class="t" style="top:236.37px;font-size:7.0px;line-height:7.0px;color:#000;font-weight:bold;left:-147.50px;width:800px;text-align:center;transform:scaleX(0.964);transform-origin:50% 0;">POOL</div><svg class="s" style="left:247.0px;top:251.0px;" width="11" height="11" viewBox="0 0 11 11"><rect x="1.2" y="1.2" width="8.6" height="8.6" rx="1.4" fill="none" stroke="#1a1a1a" stroke-width="1.05"/><path d="M3 5.6L4.8 7.3L8.2 3.4" fill="none" stroke="#1a1a1a" stroke-width="1"/></svg><svg class="s" style="left:247.0px;top:263.0px;" width="11" height="11" viewBox="0 0 11 11"><rect x="1.4" y="1.2" width="8.2" height="8.8" rx="2" fill="none" stroke="#1a1a1a" stroke-width="1.05"/><rect x="3.9" y="3.7" width="1.2" height="3.8" fill="#000"/><rect x="5.9" y="3.7" width="1.2" height="3.8" fill="#000"/></svg><svg class="s" style="left:247.0px;top:275.0px;" width="11" height="11" viewBox="0 0 11 11"><path d="M1.6 1.6L9.4 9.4M9.4 1.6L1.6 9.4" stroke="#000" stroke-width="2"/></svg><svg class="s" style="left:247.0px;top:287.0px;" width="11" height="11" viewBox="0 0 11 11"><circle cx="5.5" cy="5.5" r="4.5" fill="#000"/><rect x="2.5" y="4.6" width="6" height="1.8" fill="#fff"/></svg><svg class="s" style="left:247.0px;top:299.0px;" width="11" height="11" viewBox="0 0 11 11"><rect x="1.2" y="1.2" width="8.6" height="8.6" rx="0.8" fill="#fff" stroke="#1a1a1a" stroke-width="1"/><path d="M1.2 4.1H9.8M1.2 7H9.8M4.1 1.2V9.8M7 1.2V9.8" stroke="#8a8a8a" stroke-width="0.6"/><path d="M2.2 8.8L8.8 2.2" stroke="#1a1a1a" stroke-width="1"/></svg><svg class="s" style="left:247.0px;top:311.0px;" width="11" height="11" viewBox="0 0 11 11"><circle cx="5.5" cy="6.3" r="3.6" fill="#9a9a9a" stroke="#1a1a1a" stroke-width="1"/><path d="M3.5 4.3L7.5 8.3M7.5 4.3L3.5 8.3" stroke="#eee" stroke-width="0.6"/><rect x="4.5" y="1" width="2" height="1.8" fill="#1a1a1a"/></svg><svg class="s" style="left:247.0px;top:323.0px;" width="11" height="11" viewBox="0 0 11 11"><path d="M1.5 8.6H3.4L1.5 9.8H3.6M3.8 6.6H5.8L3.8 8.2H6.2M6.4 3H9.4L6.4 5.8H9.6" fill="none" stroke="#1a1a1a" stroke-width="1"/></svg><svg class="s" style="left:247.0px;top:335.0px;" width="11" height="11" viewBox="0 0 11 11"><g transform="rotate(-45 5.5 5.5)"><ellipse cx="5.5" cy="5.5" rx="5" ry="2.5" fill="#fff" stroke="#1a1a1a" stroke-width="0.9"/><path d="M0.6 5.5Q1.2 3.2 3.2 3.1V7.9Q1.2 7.8 0.6 5.5Z" fill="#1a1a1a"/><path d="M10.4 5.5Q9.8 3.4 8.2 3.2V7.8Q9.8 7.6 10.4 5.5Z" fill="#1a1a1a"/><rect x="4.8" y="3" width="1.4" height="5" fill="#8a8a8a"/></g></svg><svg class="s" style="left:247.0px;top:347.0px;" width="11" height="11" viewBox="0 0 11 11"><circle cx="5.5" cy="5.5" r="4" fill="none" stroke="#111" stroke-width="1.5"/></svg><svg class="s" style="left:247.0px;top:359.0px;" width="11" height="11" viewBox="0 0 11 11"><circle cx="5.5" cy="4.5" r="3.3" fill="#f2f2f2" stroke="#333" stroke-width="0.9"/><path d="M4.3 7.6V9.8H6.7V7.6" fill="none" stroke="#333" stroke-width="0.9"/><path d="M4.6 4.4L5.5 6.2L6.4 4.4" fill="none" stroke="#999" stroke-width="0.6"/></svg><svg class="s" style="left:247.0px;top:371.0px;" width="11" height="11" viewBox="0 0 11 11"><rect x="2.2" y="1" width="1.2" height="9.6" fill="#111"/><path d="M3.4 2.2L9.6 4.8L3.4 7.4Z" fill="#000"/></svg><svg class="s" style="left:247.0px;top:383.0px;" width="11" height="11" viewBox="0 0 11 11"><path d="M5.5 9.6L1.8 6Q0.6 4.4 1.5 2.8Q2.9 1.2 4.6 2.3L5.5 3.1L6.4 2.3Q8.1 1.2 9.5 2.8Q10.4 4.4 9.2 6Z" fill="#707070" stroke="#1a1a1a" stroke-width="0.8"/><path d="M3 4L7 8M5 3.4L8.6 7" stroke="#aaa" stroke-width="0.5"/></svg><svg class="s" style="left:247.0px;top:395.0px;" width="11" height="11" viewBox="0 0 11 11"><path d="M5.2 1.2Q7.6 1.4 7.4 4.2Q9.8 4.6 9.4 7.4Q9 10 5.8 9.8Q1.6 9.8 1.6 6.8Q1.8 4.2 4.2 4Q3.8 1.4 5.2 1.2Z" fill="none" stroke="#333" stroke-width="0.85"/><path d="M5.4 4.2V9.6" stroke="#555" stroke-width="0.7"/></svg><svg class="s" style="left:247.0px;top:407.0px;" width="11" height="11" viewBox="0 0 11 11"><path d="M5.2 9.8Q7.6 9.6 7.4 6.8Q9.8 6.4 9.4 3.6Q9 1 5.8 1.2Q1.6 1.2 1.6 4.2Q1.8 6.8 4.2 7Q3.8 9.6 5.2 9.8Z" fill="none" stroke="#333" stroke-width="0.85"/><path d="M5.4 1.4V6.8" stroke="#555" stroke-width="0.7"/></svg><svg class="s" style="left:247.0px;top:419.0px;" width="11" height="11" viewBox="0 0 11 11"><path d="M7 0.8L3 6H5.4L3.8 10.2L8.2 4.8H5.8Z" fill="#000"/></svg><svg class="s" style="left:247.0px;top:431.0px;" width="11" height="11" viewBox="0 0 11 11"><path d="M1.8 1.2H6.6L8.8 3.4V9.8H1.8Z" fill="#f4f4f4" stroke="#333" stroke-width="0.85"/><path d="M3.6 8.6L9.4 3" stroke="#1a1a1a" stroke-width="1.3"/><path d="M3 4H5.6M3 5.8H4.8" stroke="#999" stroke-width="0.6"/></svg><svg class="s" style="left:247.0px;top:443.0px;" width="11" height="11" viewBox="0 0 11 11"><path d="M5.5 0.8L6.9 4L10.3 4.2L7.7 6.5L8.5 9.9L5.5 8L2.5 9.9L3.3 6.5L0.7 4.2L4.1 4Z" fill="#000"/></svg><svg class="s" style="left:247.0px;top:455.0px;" width="11" height="11" viewBox="0 0 11 11"><path d="M5.5 0.8Q9.2 4.4 9 6.6Q8.8 10 5.5 10.1Q2.2 10 2 6.6Q1.8 4.4 5.5 0.8Z" fill="#fff" stroke="#333" stroke-width="0.85"/><path d="M5.6 4.2Q7.8 6.2 7.6 7.6Q7.4 9.4 5.5 9.4Q3.6 9.3 3.5 7.6Q3.6 6.2 5.6 4.2Z" fill="#000"/></svg><svg class="s" style="left:247.0px;top:467.0px;" width="11" height="11" viewBox="0 0 11 11"><path d="M5.5 0.8Q9.4 0.8 9.4 4.8Q9.4 6.8 7.4 8V10H3.6V8Q1.6 6.8 1.6 4.8Q1.6 0.8 5.5 0.8Z" fill="#a8a8a8" stroke="#333" stroke-width="0.85"/><path d="M3.2 3.6H7.8M3 5.4H8M3.6 7.2H7.4" stroke="#e6e6e6" stroke-width="0.6"/></svg><svg class="s" style="left:247.0px;top:479.0px;" width="11" height="11" viewBox="0 0 11 11"><path d="M5.5 0.6Q9.2 5.2 9 7Q8.8 10.2 5.5 10.3Q2.2 10.2 2 7Q1.8 5.2 5.5 0.6Z" fill="#000"/></svg><svg class="s" style="left:247.0px;top:491.0px;" width="11" height="11" viewBox="0 0 11 11"><circle cx="5.5" cy="5.5" r="4" fill="none" stroke="#222" stroke-width="1.2" stroke-dasharray="1.5 0.6"/></svg><svg class="s" style="left:247.0px;top:503.0px;" width="11" height="11" viewBox="0 0 11 11"><path d="M1.2 6.6Q4.4 1.6 9.6 1.2L9.2 9.8Q4.4 9.4 1.2 6.6Z" fill="#fff" stroke="#333" stroke-width="0.85"/><path d="M3.6 6.2Q5.6 4.2 7.8 4.2M4.8 7.6Q6.4 6.4 8 6.6" fill="none" stroke="#555" stroke-width="0.7"/><circle cx="7.8" cy="7.6" r="1" fill="#1a1a1a"/></svg><svg class="s" style="left:247.0px;top:515.0px;" width="11" height="11" viewBox="0 0 11 11"><rect x="1.4" y="3.2" width="8.2" height="2.4" fill="#1a1a1a"/><rect x="2" y="5.6" width="7" height="4.4" fill="#fff" stroke="#333" stroke-width="0.85"/><rect x="4.8" y="3.2" width="1.4" height="6.8" fill="#1a1a1a"/><path d="M5.5 3Q3.6 0.4 2.6 1.8Q2.4 3 5.5 3Q7.4 0.4 8.4 1.8Q8.6 3 5.5 3" fill="none" stroke="#1a1a1a" stroke-width="0.8"/></svg><div class="r" style="left:284px;top:214px;width:295px;height:37px;background:#ead1dc;"></div><div class="r" style="left:284px;top:238px;width:295px;height:1px;background:rgba(255,255,255,0.55);"></div><div class="r" style="left:359px;top:238px;width:1px;height:12px;background:rgba(255,255,255,0.55);"></div><div class="r" style="left:469px;top:238px;width:1px;height:12px;background:rgba(255,255,255,0.55);"></div><div class="r" style="left:284px;top:262px;width:295px;height:1px;background:#f2f2f2;"></div><div class="r" style="left:284px;top:274px;width:295px;height:1px;background:#f2f2f2;"></div><div class="r" style="left:284px;top:286px;width:295px;height:1px;background:#f2f2f2;"></div><div class="r" style="left:284px;top:298px;width:295px;height:1px;background:#f2f2f2;"></div><div class="r" style="left:284px;top:310px;width:295px;height:1px;background:#f2f2f2;"></div><div class="r" style="left:284px;top:322px;width:295px;height:1px;background:#f2f2f2;"></div><div class="r" style="left:284px;top:334px;width:295px;height:1px;background:#f2f2f2;"></div><div class="r" style="left:284px;top:346px;width:295px;height:1px;background:#f2f2f2;"></div><div class="r" style="left:284px;top:358px;width:295px;height:1px;background:#f2f2f2;"></div><div class="r" style="left:284px;top:370px;width:295px;height:1px;background:#f2f2f2;"></div><div class="r" style="left:284px;top:382px;width:295px;height:1px;background:#f2f2f2;"></div><div class="r" style="left:284px;top:394px;width:295px;height:1px;background:#f2f2f2;"></div><div class="r" style="left:284px;top:406px;width:295px;height:1px;background:#f2f2f2;"></div><div class="r" style="left:284px;top:418px;width:295px;height:1px;background:#f2f2f2;"></div><div class="r" style="left:284px;top:430px;width:295px;height:1px;background:#f2f2f2;"></div><div class="r" style="left:284px;top:442px;width:295px;height:1px;background:#f2f2f2;"></div><div class="r" style="left:284px;top:454px;width:295px;height:1px;background:#f2f2f2;"></div><div class="r" style="left:284px;top:466px;width:295px;height:1px;background:#f2f2f2;"></div><div class="r" style="left:284px;top:478px;width:295px;height:1px;background:#f2f2f2;"></div><div class="r" style="left:284px;top:490px;width:295px;height:1px;background:#f2f2f2;"></div><div class="r" style="left:284px;top:502px;width:295px;height:1px;background:#f2f2f2;"></div><div class="r" style="left:284px;top:514px;width:295px;height:1px;background:#f2f2f2;"></div><div class="r" style="left:284px;top:526px;width:295px;height:1px;background:#f2f2f2;"></div><div class="r" style="left:359px;top:250px;width:1px;height:295px;background:#f2f2f2;"></div><div class="r" style="left:469px;top:250px;width:1px;height:295px;background:#f2f2f2;"></div><div class="r" style="left:284px;top:214px;width:295px;height:1px;background:#000;"></div><svg class="s" style="left:282px;top:214px;overflow:hidden;" width="5" height="331" viewBox="0 0 5 331"><rect x="1.100" y="0" width="1.900" height="331" fill="#333"/></svg><svg class="s" style="left:576px;top:214px;overflow:hidden;" width="5" height="331" viewBox="0 0 5 331"><rect x="2.000" y="0" width="1.000" height="331" fill="#000"/></svg><div class="t" style="top:224.35px;font-size:7.5px;line-height:7.5px;color:#000;font-weight:bold;left:31.00px;width:800px;text-align:center;transform:scaleX(1.047);transform-origin:50% 0;">TASK DATA</div><div class="t" style="top:241.77px;font-size:7.0px;line-height:7.0px;color:#000;font-weight:bold;left:-78.50px;width:800px;text-align:center;transform:scaleX(0.991);transform-origin:50% 0;">STATUS</div><div class="t" style="top:241.77px;font-size:7.0px;line-height:7.0px;color:#000;font-weight:bold;left:14.50px;width:800px;text-align:center;transform:scaleX(0.972);transform-origin:50% 0;">PERSON IN CHARGE</div><div class="t" style="top:241.77px;font-size:7.0px;line-height:7.0px;color:#000;font-weight:bold;left:124.00px;width:800px;text-align:center;transform:scaleX(0.969);transform-origin:50% 0;">TASK CATEGORY</div><svg class="s" style="left:291.5px;top:251.0px;" width="11" height="11" viewBox="0 0 11 11"><circle cx="5.5" cy="6.3" r="3.6" fill="#9a9a9a" stroke="#1a1a1a" stroke-width="1"/><path d="M3.5 4.3L7.5 8.3M7.5 4.3L3.5 8.3" stroke="#eee" stroke-width="0.6"/><rect x="4.5" y="1" width="2" height="1.8" fill="#1a1a1a"/></svg><div class="t" style="top:253.81px;font-size:7.9px;line-height:7.9px;color:#000;left:-65.00px;width:800px;text-align:center;">To Do</div><div class="t" style="top:253.81px;font-size:7.9px;line-height:7.9px;color:#000;left:14.50px;width:800px;text-align:center;">Reza Mahendra</div><div class="t" style="top:253.81px;font-size:7.9px;line-height:7.9px;color:#000;left:124.00px;width:800px;text-align:center;">Business</div><svg class="s" style="left:291.5px;top:263.0px;" width="11" height="11" viewBox="0 0 11 11"><path d="M5.5 0.8L6.9 4L10.3 4.2L7.7 6.5L8.5 9.9L5.5 8L2.5 9.9L3.3 6.5L0.7 4.2L4.1 4Z" fill="#000"/></svg><div class="t" style="top:265.81px;font-size:7.9px;line-height:7.9px;color:#000;left:-65.00px;width:800px;text-align:center;">Started</div><div class="t" style="top:265.81px;font-size:7.9px;line-height:7.9px;color:#000;left:14.50px;width:800px;text-align:center;">Siska Amelia</div><div class="t" style="top:265.81px;font-size:7.9px;line-height:7.9px;color:#000;left:124.00px;width:800px;text-align:center;">Personal</div><svg class="s" style="left:291.5px;top:275.0px;" width="11" height="11" viewBox="0 0 11 11"><g transform="rotate(-45 5.5 5.5)"><ellipse cx="5.5" cy="5.5" rx="5" ry="2.5" fill="#fff" stroke="#1a1a1a" stroke-width="0.9"/><path d="M0.6 5.5Q1.2 3.2 3.2 3.1V7.9Q1.2 7.8 0.6 5.5Z" fill="#1a1a1a"/><path d="M10.4 5.5Q9.8 3.4 8.2 3.2V7.8Q9.8 7.6 10.4 5.5Z" fill="#1a1a1a"/><rect x="4.8" y="3" width="1.4" height="5" fill="#8a8a8a"/></g></svg><div class="t" style="top:277.81px;font-size:7.9px;line-height:7.9px;color:#000;left:-65.00px;width:800px;text-align:center;">In Progress</div><div class="t" style="top:277.81px;font-size:7.9px;line-height:7.9px;color:#000;left:14.50px;width:800px;text-align:center;">Fajar Ramadhan</div><svg class="s" style="left:291.5px;top:287.0px;" width="11" height="11" viewBox="0 0 11 11"><path d="M5.2 1.2Q7.6 1.4 7.4 4.2Q9.8 4.6 9.4 7.4Q9 10 5.8 9.8Q1.6 9.8 1.6 6.8Q1.8 4.2 4.2 4Q3.8 1.4 5.2 1.2Z" fill="none" stroke="#333" stroke-width="0.85"/><path d="M5.4 4.2V9.6" stroke="#555" stroke-width="0.7"/></svg><div class="t" style="top:289.81px;font-size:7.9px;line-height:7.9px;color:#000;left:-65.00px;width:800px;text-align:center;">Completed</div><div class="t" style="top:289.81px;font-size:7.9px;line-height:7.9px;color:#000;left:14.50px;width:800px;text-align:center;">Maya Puspita</div><svg class="s" style="left:291.5px;top:299.0px;" width="11" height="11" viewBox="0 0 11 11"><rect x="1.4" y="1.2" width="8.2" height="8.8" rx="2" fill="none" stroke="#1a1a1a" stroke-width="1.05"/><rect x="3.9" y="3.7" width="1.2" height="3.8" fill="#000"/><rect x="5.9" y="3.7" width="1.2" height="3.8" fill="#000"/></svg><div class="t" style="top:301.81px;font-size:7.9px;line-height:7.9px;color:#000;left:-65.00px;width:800px;text-align:center;">Hold</div><div class="t" style="top:301.81px;font-size:7.9px;line-height:7.9px;color:#000;left:14.50px;width:800px;text-align:center;">Aditya Nugraha</div><svg class="s" style="left:291.5px;top:311.0px;" width="11" height="11" viewBox="0 0 11 11"><path d="M5.2 9.8Q7.6 9.6 7.4 6.8Q9.8 6.4 9.4 3.6Q9 1 5.8 1.2Q1.6 1.2 1.6 4.2Q1.8 6.8 4.2 7Q3.8 9.6 5.2 9.8Z" fill="none" stroke="#333" stroke-width="0.85"/><path d="M5.4 1.4V6.8" stroke="#555" stroke-width="0.7"/></svg><div class="t" style="top:313.81px;font-size:7.9px;line-height:7.9px;color:#000;left:-65.00px;width:800px;text-align:center;">Cancelled</div><div class="t" style="top:313.81px;font-size:7.9px;line-height:7.9px;color:#000;left:14.50px;width:800px;text-align:center;">Fitri Handayani</div><svg class="s" style="left:291.5px;top:323.0px;" width="11" height="11" viewBox="0 0 11 11"><circle cx="5.5" cy="4.5" r="3.3" fill="#f2f2f2" stroke="#333" stroke-width="0.9"/><path d="M4.3 7.6V9.8H6.7V7.6" fill="none" stroke="#333" stroke-width="0.9"/><path d="M4.6 4.4L5.5 6.2L6.4 4.4" fill="none" stroke="#999" stroke-width="0.6"/></svg><div class="t" style="top:325.81px;font-size:7.9px;line-height:7.9px;color:#000;left:-65.00px;width:800px;text-align:center;">To Review</div><div class="t" style="top:325.81px;font-size:7.9px;line-height:7.9px;color:#000;left:14.50px;width:800px;text-align:center;">Gilang Permana</div><svg class="s" style="left:291.5px;top:335.0px;" width="11" height="11" viewBox="0 0 11 11"><path d="M1.5 8.6H3.4L1.5 9.8H3.6M3.8 6.6H5.8L3.8 8.2H6.2M6.4 3H9.4L6.4 5.8H9.6" fill="none" stroke="#1a1a1a" stroke-width="1"/></svg><div class="t" style="top:337.81px;font-size:7.9px;line-height:7.9px;color:#000;left:-65.00px;width:800px;text-align:center;">To Follow Up</div><div class="t" style="top:337.81px;font-size:7.9px;line-height:7.9px;color:#000;left:14.50px;width:800px;text-align:center;">Nadia Safira</div><div class="r" style="left:591px;top:214px;width:220px;height:37px;background:#d9ead3;"></div><div class="r" style="left:591px;top:238px;width:220px;height:1px;background:rgba(255,255,255,0.55);"></div><div class="r" style="left:701px;top:238px;width:1px;height:12px;background:rgba(255,255,255,0.55);"></div><div class="r" style="left:591px;top:262px;width:220px;height:1px;background:#f2f2f2;"></div><div class="r" style="left:591px;top:274px;width:220px;height:1px;background:#f2f2f2;"></div><div class="r" style="left:591px;top:286px;width:220px;height:1px;background:#f2f2f2;"></div><div class="r" style="left:591px;top:298px;width:220px;height:1px;background:#f2f2f2;"></div><div class="r" style="left:591px;top:310px;width:220px;height:1px;background:#f2f2f2;"></div><div class="r" style="left:591px;top:322px;width:220px;height:1px;background:#f2f2f2;"></div><div class="r" style="left:591px;top:334px;width:220px;height:1px;background:#f2f2f2;"></div><div class="r" style="left:591px;top:346px;width:220px;height:1px;background:#f2f2f2;"></div><div class="r" style="left:591px;top:358px;width:220px;height:1px;background:#f2f2f2;"></div><div class="r" style="left:591px;top:370px;width:220px;height:1px;background:#f2f2f2;"></div><div class="r" style="left:591px;top:382px;width:220px;height:1px;background:#f2f2f2;"></div><div class="r" style="left:591px;top:394px;width:220px;height:1px;background:#f2f2f2;"></div><div class="r" style="left:591px;top:406px;width:220px;height:1px;background:#f2f2f2;"></div><div class="r" style="left:591px;top:418px;width:220px;height:1px;background:#f2f2f2;"></div><div class="r" style="left:591px;top:430px;width:220px;height:1px;background:#f2f2f2;"></div><div class="r" style="left:591px;top:442px;width:220px;height:1px;background:#f2f2f2;"></div><div class="r" style="left:591px;top:454px;width:220px;height:1px;background:#f2f2f2;"></div><div class="r" style="left:591px;top:466px;width:220px;height:1px;background:#f2f2f2;"></div><div class="r" style="left:591px;top:478px;width:220px;height:1px;background:#f2f2f2;"></div><div class="r" style="left:591px;top:490px;width:220px;height:1px;background:#f2f2f2;"></div><div class="r" style="left:591px;top:502px;width:220px;height:1px;background:#f2f2f2;"></div><div class="r" style="left:591px;top:514px;width:220px;height:1px;background:#f2f2f2;"></div><div class="r" style="left:591px;top:526px;width:220px;height:1px;background:#f2f2f2;"></div><div class="r" style="left:701px;top:250px;width:1px;height:295px;background:#f2f2f2;"></div><div class="r" style="left:591px;top:214px;width:220px;height:1px;background:#000;"></div><svg class="s" style="left:589px;top:214px;overflow:hidden;" width="5" height="331" viewBox="0 0 5 331"><rect x="2.000" y="0" width="1.000" height="331" fill="#000"/></svg><svg class="s" style="left:808px;top:214px;overflow:hidden;" width="5" height="331" viewBox="0 0 5 331"><rect x="2.000" y="0" width="1.000" height="331" fill="#000"/></svg><div class="t" style="top:224.35px;font-size:7.5px;line-height:7.5px;color:#000;font-weight:bold;left:301.50px;width:800px;text-align:center;transform:scaleX(0.979);transform-origin:50% 0;">PROJECT DATA</div><div class="t" style="top:241.77px;font-size:7.0px;line-height:7.0px;color:#000;font-weight:bold;left:246.50px;width:800px;text-align:center;transform:scaleX(0.916);transform-origin:50% 0;">PROJECT TYPE</div><div class="t" style="top:241.77px;font-size:7.0px;line-height:7.0px;color:#000;font-weight:bold;left:356.00px;width:800px;text-align:center;transform:scaleX(0.947);transform-origin:50% 0;">PROJECT CATEGORY</div><div class="t" style="top:253.81px;font-size:7.9px;line-height:7.9px;color:#000;left:246.50px;width:800px;text-align:center;">Proyek Konstruksi</div><div class="r" style="left:590px;top:263px;width:3px;height:12px;background:#fff;"></div><div class="r" style="left:575.7px;top:263px;width:124.29999999999995px;height:11px;overflow:hidden;"><div class="t" style="top:2.81px;font-size:7.9px;line-height:7.9px;color:#000;left:2.00px;">Proyek Pengembangan Perangkat Lunak</div></div><div class="r" style="left:590px;top:275px;width:3px;height:12px;background:#fff;"></div><div class="r" style="left:577px;top:275px;width:3px;height:12px;background:#fff;"></div><div class="r" style="left:566.5px;top:275px;width:133.5px;height:11px;overflow:hidden;"><div class="t" style="top:2.81px;font-size:7.9px;line-height:7.9px;color:#000;left:2.00px;">Proyek Penelitian dan Pengembangan</div></div><div class="r" style="left:590px;top:287px;width:3px;height:12px;background:#fff;"></div><div class="r" style="left:586px;top:287px;width:114px;height:11px;overflow:hidden;"><div class="t" style="top:2.81px;font-size:7.9px;line-height:7.9px;color:#000;left:2.00px;">Proyek Pengadaan (Procurement)</div></div><div class="r" style="left:591px;top:299px;width:109px;height:11px;overflow:hidden;"><div class="t" style="top:2.81px;font-size:7.9px;line-height:7.9px;color:#000;left:2.00px;">Proyek Manajemen Perubahan</div></div><div class="t" style="top:313.81px;font-size:7.9px;line-height:7.9px;color:#000;left:246.50px;width:800px;text-align:center;">Proyek Acara (Event)</div><div class="r" style="left:590px;top:323px;width:3px;height:12px;background:#fff;"></div><div class="r" style="left:586px;top:323px;width:114px;height:11px;overflow:hidden;"><div class="t" style="top:2.81px;font-size:7.9px;line-height:7.9px;color:#000;left:2.00px;">Proyek Pemasaran dan Kampanye</div></div><div class="t" style="top:337.81px;font-size:7.9px;line-height:7.9px;color:#000;left:246.50px;width:800px;text-align:center;">Proyek Manufaktur</div><div class="r" style="left:597.5px;top:347px;width:102.5px;height:11px;overflow:hidden;"><div class="t" style="top:2.81px;font-size:7.9px;line-height:7.9px;color:#000;left:2.00px;">Proyek Konsultasi Strategis</div></div><div class="r" style="left:590px;top:359px;width:3px;height:12px;background:#fff;"></div><div class="r" style="left:587px;top:359px;width:113px;height:11px;overflow:hidden;"><div class="t" style="top:2.81px;font-size:7.9px;line-height:7.9px;color:#000;left:2.00px;">Proyek Sosial dan Pemberdayaan</div></div><div class="r" style="left:809px;top:347px;width:3px;height:12px;background:#fff;"></div><div class="t" style="top:253.81px;font-size:7.9px;line-height:7.9px;color:#000;left:356.00px;width:800px;text-align:center;">Teknologi Informasi</div><div class="t" style="top:265.81px;font-size:7.9px;line-height:7.9px;color:#000;left:356.00px;width:800px;text-align:center;">Infrastruktur</div><div class="t" style="top:277.81px;font-size:7.9px;line-height:7.9px;color:#000;left:356.00px;width:800px;text-align:center;">Energi dan Sumber Daya Alam</div><div class="t" style="top:289.81px;font-size:7.9px;line-height:7.9px;color:#000;left:356.00px;width:800px;text-align:center;">Kesehatan</div><div class="t" style="top:301.81px;font-size:7.9px;line-height:7.9px;color:#000;left:356.00px;width:800px;text-align:center;">Pendidikan</div><div class="t" style="top:313.81px;font-size:7.9px;line-height:7.9px;color:#000;left:356.00px;width:800px;text-align:center;">Keuangan dan Perbankan</div><div class="t" style="top:325.81px;font-size:7.9px;line-height:7.9px;color:#000;left:356.00px;width:800px;text-align:center;">Lingkungan dan Kehutanan</div><div class="t" style="top:337.81px;font-size:7.9px;line-height:7.9px;color:#000;left:356.00px;width:800px;text-align:center;">Transportasi dan Logistik</div><div class="t" style="top:349.81px;font-size:7.9px;line-height:7.9px;color:#000;left:356.00px;width:800px;text-align:center;">Pariwisata dan Ekonomi Kreatif</div><div class="t" style="top:361.81px;font-size:7.9px;line-height:7.9px;color:#000;left:356.00px;width:800px;text-align:center;">Pertahanan dan Keamanan</div><div class="r" style="left:823px;top:214px;width:221px;height:37px;background:#d0e8ee;"></div><div class="r" style="left:823px;top:238px;width:221px;height:1px;background:rgba(255,255,255,0.55);"></div><div class="r" style="left:933px;top:238px;width:1px;height:12px;background:rgba(255,255,255,0.55);"></div><div class="r" style="left:823px;top:262px;width:221px;height:1px;background:#f2f2f2;"></div><div class="r" style="left:823px;top:274px;width:221px;height:1px;background:#f2f2f2;"></div><div class="r" style="left:823px;top:286px;width:221px;height:1px;background:#f2f2f2;"></div><div class="r" style="left:823px;top:298px;width:221px;height:1px;background:#f2f2f2;"></div><div class="r" style="left:823px;top:310px;width:221px;height:1px;background:#f2f2f2;"></div><div class="r" style="left:823px;top:322px;width:221px;height:1px;background:#f2f2f2;"></div><div class="r" style="left:823px;top:334px;width:221px;height:1px;background:#f2f2f2;"></div><div class="r" style="left:823px;top:346px;width:221px;height:1px;background:#f2f2f2;"></div><div class="r" style="left:823px;top:358px;width:221px;height:1px;background:#f2f2f2;"></div><div class="r" style="left:823px;top:370px;width:221px;height:1px;background:#f2f2f2;"></div><div class="r" style="left:823px;top:382px;width:221px;height:1px;background:#f2f2f2;"></div><div class="r" style="left:823px;top:394px;width:221px;height:1px;background:#f2f2f2;"></div><div class="r" style="left:823px;top:406px;width:221px;height:1px;background:#f2f2f2;"></div><div class="r" style="left:823px;top:418px;width:221px;height:1px;background:#f2f2f2;"></div><div class="r" style="left:823px;top:430px;width:221px;height:1px;background:#f2f2f2;"></div><div class="r" style="left:823px;top:442px;width:221px;height:1px;background:#f2f2f2;"></div><div class="r" style="left:823px;top:454px;width:221px;height:1px;background:#f2f2f2;"></div><div class="r" style="left:823px;top:466px;width:221px;height:1px;background:#f2f2f2;"></div><div class="r" style="left:823px;top:478px;width:221px;height:1px;background:#f2f2f2;"></div><div class="r" style="left:823px;top:490px;width:221px;height:1px;background:#f2f2f2;"></div><div class="r" style="left:823px;top:502px;width:221px;height:1px;background:#f2f2f2;"></div><div class="r" style="left:823px;top:514px;width:221px;height:1px;background:#f2f2f2;"></div><div class="r" style="left:823px;top:526px;width:221px;height:1px;background:#f2f2f2;"></div><div class="r" style="left:933px;top:250px;width:1px;height:295px;background:#f2f2f2;"></div><div class="r" style="left:823px;top:214px;width:221px;height:1px;background:#000;"></div><svg class="s" style="left:822px;top:214px;overflow:hidden;" width="5" height="331" viewBox="0 0 5 331"><rect x="1.100" y="0" width="1.800" height="331" fill="#2a2a2a"/></svg><div class="t" style="top:224.35px;font-size:7.5px;line-height:7.5px;color:#000;font-weight:bold;left:533.50px;width:800px;text-align:center;transform:scaleX(0.91);transform-origin:50% 0;">LEADS DATA</div><div class="t" style="top:241.77px;font-size:7.0px;line-height:7.0px;color:#000;font-weight:bold;left:478.50px;width:800px;text-align:center;transform:scaleX(1.044);transform-origin:50% 0;">TYPE OF COMMUNICATION</div><div class="t" style="top:241.77px;font-size:7.0px;line-height:7.0px;color:#000;font-weight:bold;left:588.50px;width:800px;text-align:center;transform:scaleX(0.922);transform-origin:50% 0;">LEAD SOURCE</div><div class="t" style="top:253.81px;font-size:7.9px;line-height:7.9px;color:#000;left:478.50px;width:800px;text-align:center;">Email</div><div class="t" style="top:265.81px;font-size:7.9px;line-height:7.9px;color:#000;left:478.50px;width:800px;text-align:center;">Text</div><div class="t" style="top:277.81px;font-size:7.9px;line-height:7.9px;color:#000;left:478.50px;width:800px;text-align:center;">Call</div><div class="t" style="top:289.81px;font-size:7.9px;line-height:7.9px;color:#000;left:478.50px;width:800px;text-align:center;">Memo</div><div class="t" style="top:253.81px;font-size:7.9px;line-height:7.9px;color:#000;left:588.50px;width:800px;text-align:center;">Referral</div><div class="t" style="top:265.81px;font-size:7.9px;line-height:7.9px;color:#000;left:588.50px;width:800px;text-align:center;">Website</div><div class="t" style="top:277.81px;font-size:7.9px;line-height:7.9px;color:#000;left:588.50px;width:800px;text-align:center;">Email Marketing</div><div class="t" style="top:289.81px;font-size:7.9px;line-height:7.9px;color:#000;left:588.50px;width:800px;text-align:center;">Social Media</div><div class="r" style="left:0px;top:531px;width:1024px;height:18px;background:#f0f0f0;"></div><svg class="s" style="left:8px;top:535px;" width="5" height="9" viewBox="0 0 5 9"><path d="M4 0.8L0.8 4.5L4 8.2" fill="none" stroke="#b0b0b0" stroke-width="0.9"/></svg><svg class="s" style="left:26px;top:535px;" width="5" height="9" viewBox="0 0 5 9"><path d="M0.8 0.8L4 4.5L0.8 8.2" fill="none" stroke="#b0b0b0" stroke-width="0.9"/></svg><div class="r" style="left:57px;top:531px;width:34.5px;height:16.5px;background:#f6f6f6;border-radius:0 0 4px 4px;"></div><div class="r" style="left:58px;top:531px;width:32.5px;height:15.3px;background:linear-gradient(#ffffff 15%,#fbfab0);border-radius:0 0 3px 3px;"></div><div class="t" style="top:534.71px;font-size:7.2px;line-height:7.2px;color:#262626;left:-325.60px;width:800px;text-align:center;">SETUP</div><div class="r" style="left:62.5px;top:543.8px;width:24px;height:1.4px;background:#1b7a3a;"></div><div class="r" style="left:93px;top:536px;width:1px;height:9px;background:#d0d0d0;"></div><div class="r" style="left:156px;top:536px;width:1px;height:9px;background:#d0d0d0;"></div><div class="r" style="left:237.7px;top:536px;width:1px;height:9px;background:#d0d0d0;"></div><div class="r" style="left:329px;top:536px;width:1px;height:9px;background:#d0d0d0;"></div><div class="r" style="left:398.5px;top:536px;width:1px;height:9px;background:#d0d0d0;"></div><div class="r" style="left:501.5px;top:536px;width:1px;height:9px;background:#d0d0d0;"></div><div class="r" style="left:616.5px;top:536px;width:1px;height:9px;background:#d0d0d0;"></div><div class="r" style="left:684px;top:536px;width:1px;height:9px;background:#d0d0d0;"></div><div class="r" style="left:765px;top:536px;width:1px;height:9px;background:#d0d0d0;"></div><div class="r" style="left:95px;top:532.5px;width:58px;height:14px;background:#8fc78b;border-radius:3px;"></div><div class="t" style="top:536.67px;font-size:7.0px;line-height:7.0px;color:#303030;left:-275.55px;width:800px;text-align:center;">DASHBOARD</div><div class="r" style="left:159px;top:532.5px;width:76px;height:14px;background:#f9cfb5;border-radius:3px;"></div><div class="t" style="top:536.67px;font-size:7.0px;line-height:7.0px;color:#303030;left:-202.95px;width:800px;text-align:center;">CLIENT DATABASE</div><div class="r" style="left:240px;top:532.5px;width:87px;height:14px;background:#ecd1de;border-radius:3px;"></div><div class="t" style="top:536.67px;font-size:7.0px;line-height:7.0px;color:#303030;left:-116.60px;width:800px;text-align:center;">LEAD MANAGEMENT</div><div class="r" style="left:332px;top:532.5px;width:64px;height:14px;background:#cde6ef;border-radius:3px;"></div><div class="t" style="top:536.67px;font-size:7.0px;line-height:7.0px;color:#303030;left:-36.05px;width:800px;text-align:center;">TASK TRACKER</div><div class="r" style="left:401px;top:532.5px;width:98px;height:14px;background:#d8ebd3;border-radius:3px;"></div><div class="t" style="top:536.67px;font-size:7.0px;line-height:7.0px;color:#303030;left:50.00px;width:800px;text-align:center;">COMMUNICATION LOG</div><div class="r" style="left:504px;top:532.5px;width:110px;height:14px;background:#fdf0c8;border-radius:3px;"></div><div class="t" style="top:536.67px;font-size:7.0px;line-height:7.0px;color:#303030;left:159.20px;width:800px;text-align:center;">PROJECT-SERVICE DETAILS</div><div class="r" style="left:619px;top:532.5px;width:63px;height:14px;background:#f9cfb5;border-radius:3px;"></div><div class="t" style="top:536.67px;font-size:7.0px;line-height:7.0px;color:#303030;left:250.33px;width:800px;text-align:center;">GANTT CHART</div><div class="r" style="left:687px;top:532.5px;width:76px;height:14px;background:#ecd1de;border-radius:3px;"></div><div class="t" style="top:536.67px;font-size:7.0px;line-height:7.0px;color:#303030;left:324.55px;width:800px;text-align:center;">INVOICE TRACKER</div><svg class="s" style="left:788px;top:535px;" width="9" height="9" viewBox="0 0 9 9"><path d="M4.5 0.5V8.5M0.5 4.5H8.5" stroke="#555" stroke-width="0.9"/></svg><div class="r" style="left:929px;top:536px;width:1.3px;height:1.3px;background:#666;"></div><div class="r" style="left:929px;top:538.8px;width:1.3px;height:1.3px;background:#666;"></div><div class="r" style="left:929px;top:541.6px;width:1.3px;height:1.3px;background:#666;"></div><div class="r" style="left:938.5px;top:533px;width:86px;height:13px;background:#f7f7f7;border-radius:6px 0 0 6px;"></div><svg class="s" style="left:941.5px;top:536.5px;" width="5" height="6" viewBox="0 0 5 6"><path d="M4.5 0.3V5.7L0.5 3Z" fill="#6e6e6e"/></svg><div class="r" style="left:948.5px;top:537px;width:48.5px;height:5px;background:#6e6e6e;border-radius:2.5px;"></div><div class="r" style="left:0px;top:549px;width:1024px;height:12px;background:#f3f3f3;"></div><div class="t" style="top:552.97px;font-size:6.3px;line-height:6.3px;color:#444;left:-1.00px;">Ready</div><div class="t" style="top:552.97px;font-size:6.3px;line-height:6.3px;color:#444;left:25.00px;">Calculate</div><svg class="s" style="left:62px;top:551px;" width="9" height="9" viewBox="0 0 9 9"><rect x="0.5" y="0.5" width="8" height="7" fill="none" stroke="#555" stroke-width="0.8"/><path d="M0.5 2.5H8.5M3 2.5V7.5" stroke="#555" stroke-width="0.6"/><circle cx="6" cy="6" r="1.6" fill="#555"/></svg><svg class="s" style="left:81px;top:550.5px;" width="9" height="10" viewBox="0 0 9 10"><circle cx="4" cy="1.5" r="1.1" fill="none" stroke="#444" stroke-width="0.7"/><path d="M0.5 3.5H7.5M4 3.5V6L1.8 9M4 6L6.2 9" fill="none" stroke="#444" stroke-width="0.8"/><path d="M5.5 6.5L8.5 9.5M8.5 6.5L5.5 9.5" stroke="#444" stroke-width="0.7"/></svg><div class="t" style="top:552.87px;font-size:6.3px;line-height:6.3px;color:#333;font-weight:bold;left:92.00px;transform:scaleX(0.97);transform-origin:0 0;">Accessibility: Investigate</div><div class="r" style="left:916.5px;top:549px;width:23px;height:12px;background:#dedede;"></div><svg class="s" style="left:923px;top:551px;" width="9" height="8" viewBox="0 0 9 8"><rect x="0.5" y="0.5" width="8" height="7" fill="none" stroke="#444" stroke-width="0.8"/><path d="M3 0.5V7.5M6 0.5V7.5M0.5 3H8.5M0.5 5.3H8.5" stroke="#444" stroke-width="0.6"/></svg><svg class="s" style="left:946px;top:551px;" width="9" height="8" viewBox="0 0 9 8"><rect x="0.5" y="0.5" width="8" height="7" fill="none" stroke="#444" stroke-width="0.8"/><path d="M2.5 0.5V7.5M6.5 0.5V7.5" stroke="#444" stroke-width="0.8"/></svg><svg class="s" style="left:969px;top:550.5px;" width="9" height="9" viewBox="0 0 9 9"><rect x="0.5" y="0.5" width="8" height="8" fill="none" stroke="#444" stroke-width="0.8"/><path d="M0.5 5.5H5.5V0.5" fill="none" stroke="#444" stroke-width="0.7"/></svg><div class="r" style="left:988px;top:554.5px;width:4px;height:1px;background:#888;"></div><div class="r" style="left:995px;top:555px;width:29px;height:0.8px;background:#444;"></div><div class="r" style="left:1022.5px;top:552px;width:2px;height:6px;background:#444;"></div><div class="r" style="left:0px;top:561px;width:1024px;height:4px;background:#cfdcd8;"></div><div class="r" style="left:352px;top:563.5px;width:21px;height:1.5px;background:#e8a49a;"></div>
</body></html>
